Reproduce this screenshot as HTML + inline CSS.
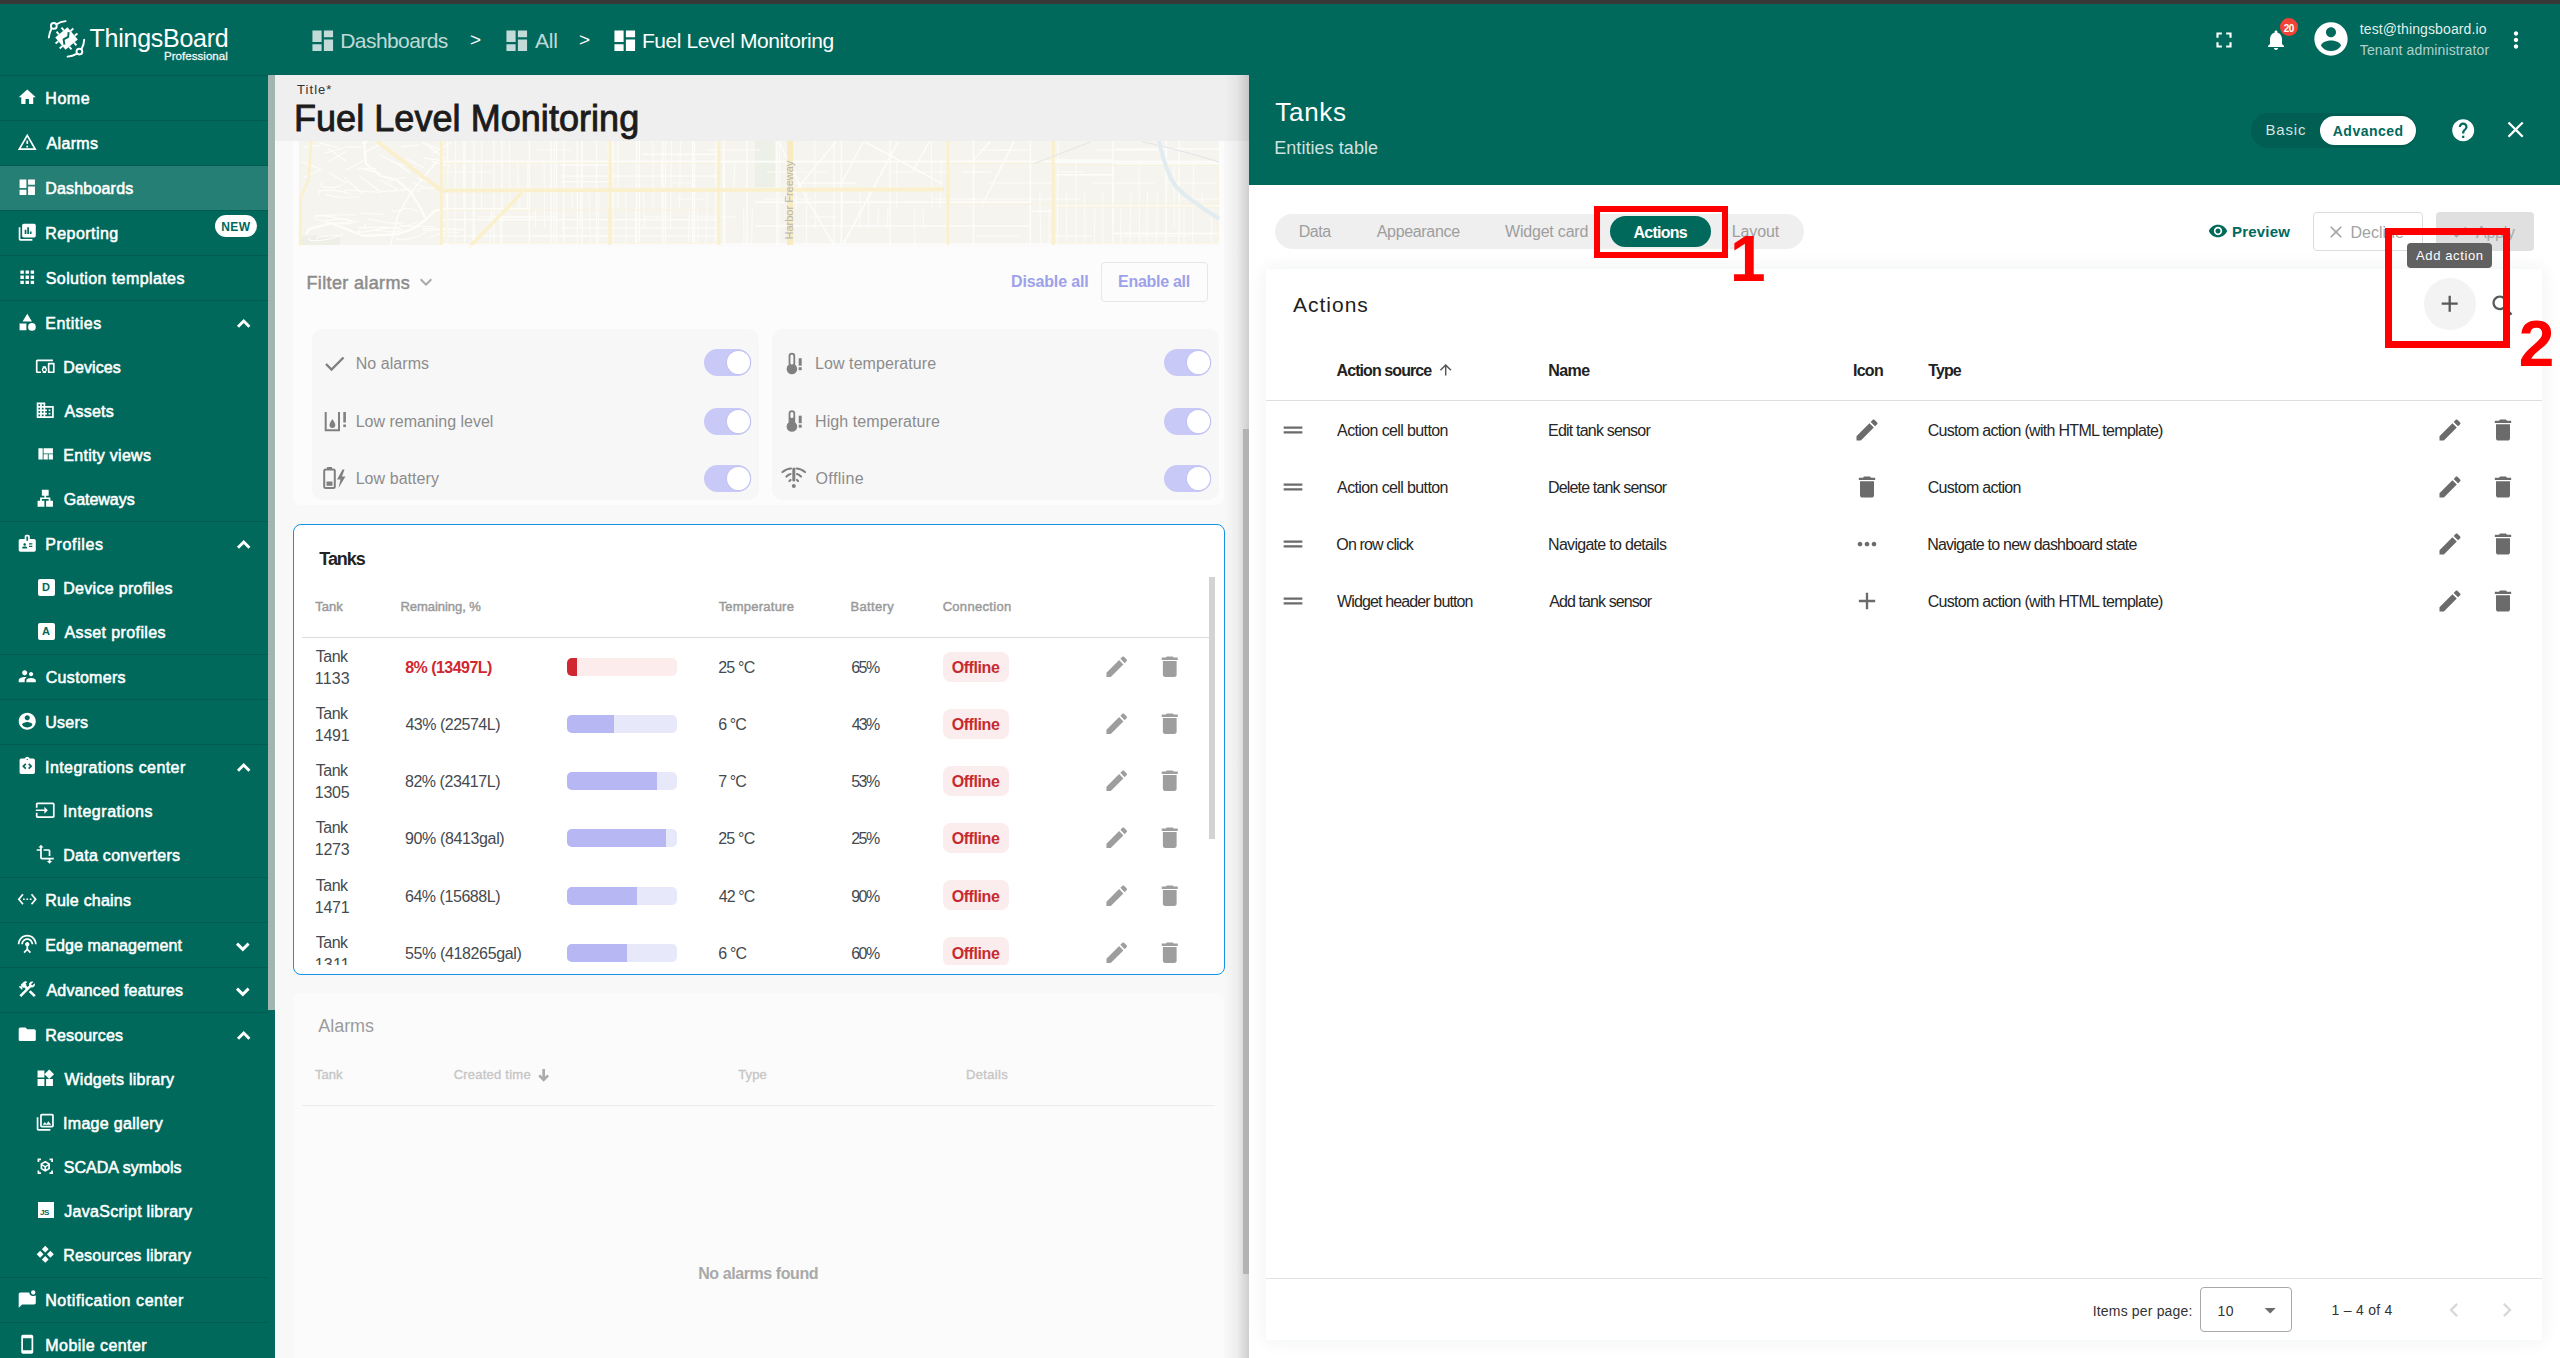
<!DOCTYPE html><html><head><meta charset="utf-8"><title>ThingsBoard</title><style>
*{box-sizing:border-box;margin:0;padding:0}
html,body{width:2560px;height:1358px;overflow:hidden;background:#fafafa;font-family:"Liberation Sans",sans-serif;position:relative}
.a{position:absolute}
svg{display:block;position:absolute;overflow:visible}
.t{position:absolute;white-space:nowrap;line-height:1}
</style></head><body>
<div class="a" style="left:0px;top:0px;width:2560px;height:4px;background:#383838"></div>
<div class="a" style="left:0px;top:4px;width:2560px;height:71px;background:#00695c"></div>
<div class="a" style="left:0px;top:75px;width:275px;height:1283px;background:#00695c"></div>
<div class="a" style="left:0px;top:75px;width:268px;height:1px;background:rgba(0,0,0,0.12)"></div>
<div class="a" style="left:0px;top:166px;width:268px;height:44px;background:rgba(255,255,255,0.15)"></div>
<svg style="left:17.00px;top:87.00px" width="20.5" height="20.5" viewBox="0 0 24 24" ><path fill="#fff" d="M10 20v-6h4v6h5v-8h3L12 3 2 12h3v8z"/></svg>
<div class="t" style="left:45.25px;top:91.05px;font-size:16px;color:#fff;font-weight:normal;letter-spacing:0.583px;-webkit-text-stroke:0.55px #fff">Home</div>
<div class="a" style="left:0px;top:120px;width:268px;height:1px;background:rgba(0,0,0,0.13)"></div>
<svg style="left:17.00px;top:132.00px" width="20.5" height="20.5" viewBox="0 0 24 24" ><path fill="#fff" d="M12 5.99L19.53 19H4.47L12 5.99M12 2L1 21h22L12 2zm1 14h-2v2h2v-2zm0-6h-2v4h2v-4z"/></svg>
<div class="t" style="left:46.50px;top:136.05px;font-size:16px;color:#fff;font-weight:normal;letter-spacing:0.350px;-webkit-text-stroke:0.55px #fff">Alarms</div>
<div class="a" style="left:0px;top:165px;width:268px;height:1px;background:rgba(0,0,0,0.13)"></div>
<svg style="left:17.00px;top:177.00px" width="20.5" height="20.5" viewBox="0 0 24 24" ><path fill="#fff" d="M3 13h8V3H3v10zm0 8h8v-6H3v6zm10 0h8V11h-8v10zm0-18v6h8V3h-8z"/></svg>
<div class="t" style="left:45.25px;top:181.05px;font-size:16px;color:#fff;font-weight:normal;letter-spacing:0.189px;-webkit-text-stroke:0.55px #fff">Dashboards</div>
<div class="a" style="left:0px;top:210px;width:268px;height:1px;background:rgba(0,0,0,0.13)"></div>
<svg style="left:17.00px;top:222.00px" width="20.5" height="20.5" viewBox="0 0 24 24" ><path fill="#fff" d="M4 6H2v14c0 1.1.9 2 2 2h14v-2H4V6zm16-4H8c-1.1 0-2 .9-2 2v12c0 1.1.9 2 2 2h12c1.1 0 2-.9 2-2V4c0-1.1-.9-2-2-2zM11 14H9V9h2v5zm3 0h-2V6h2v8zm3 0h-2v-3h2v3z"/></svg>
<div class="t" style="left:45.25px;top:226.05px;font-size:16px;color:#fff;font-weight:normal;letter-spacing:0.444px;-webkit-text-stroke:0.55px #fff">Reporting</div>
<div class="a" style="left:0px;top:255px;width:268px;height:1px;background:rgba(0,0,0,0.13)"></div>
<svg style="left:17.00px;top:267.00px" width="20.5" height="20.5" viewBox="0 0 24 24" ><path fill="#fff" d="M4 8h4V4H4v4zm6 12h4v-4h-4v4zm-6 0h4v-4H4v4zm0-6h4v-4H4v4zm6 0h4v-4h-4v4zm6-10v4h4V4h-4zm-6 4h4V4h-4v4zm6 6h4v-4h-4v4zm0 6h4v-4h-4v4z"/></svg>
<div class="t" style="left:45.75px;top:271.05px;font-size:16px;color:#fff;font-weight:normal;letter-spacing:0.412px;-webkit-text-stroke:0.55px #fff">Solution templates</div>
<div class="a" style="left:0px;top:300px;width:268px;height:1px;background:rgba(0,0,0,0.13)"></div>
<svg style="left:17.00px;top:312.00px" width="20.5" height="20.5" viewBox="0 0 24 24" ><path fill="#fff" d="M12 2l-5.5 9h11zM17.5 13a4.5 4.5 0 1 0 0 9a4.5 4.5 0 1 0 0-9zM3 13.5h8v8H3z"/></svg>
<div class="t" style="left:45.25px;top:316.05px;font-size:16px;color:#fff;font-weight:normal;letter-spacing:0.500px;-webkit-text-stroke:0.55px #fff">Entities</div>
<svg style="left:0;top:0" width="1" height="1"><path d="M237.98 326.67 L243.7 320.95 L249.42 326.67" fill="none" stroke="#fff" stroke-width="2.9"/></svg>
<svg style="left:35.00px;top:356.00px" width="20.5" height="20.5" viewBox="0 0 24 24" ><path fill="#fff" d="M3 6h18V4H3c-1.1 0-2 .9-2 2v12c0 1.1.9 2 2 2h4v-2H3V6zm10 6H9v1.78c-.61.55-1 1.33-1 2.22s.39 1.67 1 2.22V20h4v-1.78c.61-.55 1-1.34 1-2.22s-.39-1.67-1-2.22V12zm-2 5.5c-.83 0-1.5-.67-1.5-1.5s.67-1.5 1.5-1.5 1.5.67 1.5 1.5-.67 1.5-1.5 1.5zM22 8h-6c-.5 0-1 .5-1 1v10c0 .5.5 1 1 1h6c.5 0 1-.5 1-1V9c0-.5-.5-1-1-1zm-1 10h-4v-8h4v8z"/></svg>
<div class="t" style="left:63.25px;top:360.05px;font-size:16px;color:#fff;font-weight:normal;letter-spacing:0.092px;-webkit-text-stroke:0.55px #fff">Devices</div>
<svg style="left:35.00px;top:400.00px" width="20.5" height="20.5" viewBox="0 0 24 24" ><path fill="#fff" d="M12 7V3H2v18h20V7H12zM6 19H4v-2h2v2zm0-4H4v-2h2v2zm0-4H4V9h2v2zm0-4H4V5h2v2zm4 12H8v-2h2v2zm0-4H8v-2h2v2zm0-4H8V9h2v2zm0-4H8V5h2v2zm10 12h-8v-2h2v-2h-2v-2h2v-2h-2V9h8v10zm-2-8h-2v2h2v-2zm0 4h-2v2h2v-2z"/></svg>
<div class="t" style="left:64.50px;top:404.05px;font-size:16px;color:#fff;font-weight:normal;letter-spacing:0.260px;-webkit-text-stroke:0.55px #fff">Assets</div>
<svg style="left:35.00px;top:444.00px" width="20.5" height="20.5" viewBox="0 0 24 24" ><path fill="#fff" d="M10 18h5v-6h-5v6zm-6 0h5V5H4v13zm12 0h5v-6h-5v6zM10 5v6h11V5H10z"/></svg>
<div class="t" style="left:63.25px;top:448.05px;font-size:16px;color:#fff;font-weight:normal;letter-spacing:0.295px;-webkit-text-stroke:0.55px #fff">Entity views</div>
<svg style="left:35.00px;top:488.00px" width="20.5" height="20.5" viewBox="0 0 24 24" ><path fill="#fff" d="M13 22h8v-7h-3v-4h-5V9h3V2H8v7h3v2H6v4H3v7h8v-7H8v-2h8v2h-3z"/></svg>
<div class="t" style="left:63.75px;top:492.05px;font-size:16px;color:#fff;font-weight:normal;letter-spacing:-0.029px;-webkit-text-stroke:0.55px #fff">Gateways</div>
<div class="a" style="left:0px;top:521px;width:268px;height:1px;background:rgba(0,0,0,0.13)"></div>
<svg style="left:17.00px;top:533.00px" width="20.5" height="20.5" viewBox="0 0 24 24" ><path fill="#fff" d="M20 7h-5V4c0-1.1-.9-2-2-2h-2c-1.1 0-2 .9-2 2v3H4c-1.1 0-2 .9-2 2v11c0 1.1.9 2 2 2h16c1.1 0 2-.9 2-2V9c0-1.1-.9-2-2-2zM9 12c.83 0 1.5.67 1.5 1.5S9.83 15 9 15s-1.5-.67-1.5-1.5S8.17 12 9 12zm3 6H6v-.43c0-.6.36-1.15.92-1.39.64-.28 1.34-.43 2.08-.43s1.44.15 2.08.43c.55.24.92.78.92 1.39V18zm1-9h-2V4h2v5zm5 7.5h-4V15h4v1.5zm0-3h-4V12h4v1.5z"/></svg>
<div class="t" style="left:45.25px;top:537.05px;font-size:16px;color:#fff;font-weight:normal;letter-spacing:0.643px;-webkit-text-stroke:0.55px #fff">Profiles</div>
<svg style="left:0;top:0" width="1" height="1"><path d="M237.98 547.67 L243.7 541.95 L249.42 547.67" fill="none" stroke="#fff" stroke-width="2.9"/></svg>
<div class="a" style="left:37.5px;top:578.5px;width:17px;height:17px;background:#fff;border-radius:2px"></div>
<div class="t" style="left:37.5px;top:578.5px;width:17px;height:17px;line-height:17px;text-align:center;font-size:11px;font-weight:bold;color:#00695c">D</div>
<div class="t" style="left:63.25px;top:581.05px;font-size:16px;color:#fff;font-weight:normal;letter-spacing:0.304px;-webkit-text-stroke:0.55px #fff">Device profiles</div>
<div class="a" style="left:37.5px;top:622.5px;width:17px;height:17px;background:#fff;border-radius:2px"></div>
<div class="t" style="left:37.5px;top:622.5px;width:17px;height:17px;line-height:17px;text-align:center;font-size:11px;font-weight:bold;color:#00695c">A</div>
<div class="t" style="left:64.50px;top:625.05px;font-size:16px;color:#fff;font-weight:normal;letter-spacing:0.385px;-webkit-text-stroke:0.55px #fff">Asset profiles</div>
<div class="a" style="left:0px;top:654px;width:268px;height:1px;background:rgba(0,0,0,0.13)"></div>
<svg style="left:17.00px;top:666.00px" width="20.5" height="20.5" viewBox="0 0 24 24" ><path fill="#fff" d="M16.5 12c1.38 0 2.49-1.12 2.49-2.5S17.88 7 16.5 7C15.12 7 14 8.12 14 9.5s1.12 2.5 2.5 2.5zM9 11c1.66 0 2.99-1.34 2.99-3S10.66 5 9 5C7.34 5 6 6.34 6 8s1.34 3 3 3zm7.5 3c-1.83 0-5.5.92-5.5 2.75V19h11v-2.25c0-1.830-3.67-2.75-5.5-2.75zM9 13c-2.33 0-7 1.17-7 3.5V19h7v-2.25c0-.85.33-2.34 2.37-3.47C10.5 13.1 9.66 13 9 13z"/></svg>
<div class="t" style="left:45.75px;top:670.05px;font-size:16px;color:#fff;font-weight:normal;letter-spacing:0.312px;-webkit-text-stroke:0.55px #fff">Customers</div>
<div class="a" style="left:0px;top:699px;width:268px;height:1px;background:rgba(0,0,0,0.13)"></div>
<svg style="left:17.00px;top:711.00px" width="20.5" height="20.5" viewBox="0 0 24 24" ><path fill="#fff" d="M12 2C6.48 2 2 6.48 2 12s4.48 10 10 10 10-4.48 10-10S17.52 2 12 2zm0 3c1.66 0 3 1.34 3 3s-1.34 3-3 3-3-1.34-3-3 1.34-3 3-3zm0 14.2c-2.5 0-4.71-1.28-6-3.22.03-1.99 4-3.08 6-3.08 1.99 0 5.97 1.09 6 3.08-1.29 1.94-3.5 3.22-6 3.22z"/></svg>
<div class="t" style="left:45.25px;top:715.05px;font-size:16px;color:#fff;font-weight:normal;letter-spacing:0.225px;-webkit-text-stroke:0.55px #fff">Users</div>
<div class="a" style="left:0px;top:744px;width:268px;height:1px;background:rgba(0,0,0,0.13)"></div>
<svg style="left:17.00px;top:756.00px" width="20.5" height="20.5" viewBox="0 0 24 24" ><path fill="#fff" d="M19 3h-4.18C14.4 1.84 13.3 1 12 1s-2.4.84-2.82 2H5c-1.1 0-2 .9-2 2v14c0 1.1.9 2 2 2h14c1.1 0 2-.9 2-2V5c0-1.1-.9-2-2-2zM11 14.17l-1.41 1.42L6 12l3.59-3.59L11 9.83 8.83 12 11 14.17zm1-9.42c-.41 0-.75-.34-.75-.75s.34-.75.75-.75.75.34.75.75-.34.75-.75.75zm2.41 10.84L13 14.17 15.17 12 13 9.83l1.41-1.42L18 12l-3.59 3.59z"/></svg>
<div class="t" style="left:45.00px;top:760.05px;font-size:16px;color:#fff;font-weight:normal;letter-spacing:0.431px;-webkit-text-stroke:0.55px #fff">Integrations center</div>
<svg style="left:0;top:0" width="1" height="1"><path d="M237.98 770.67 L243.7 764.95 L249.42 770.67" fill="none" stroke="#fff" stroke-width="2.9"/></svg>
<svg style="left:35.00px;top:800.00px" width="20.5" height="20.5" viewBox="0 0 24 24" ><path fill="#fff" d="M21 3.01H3c-1.1 0-2 .9-2 2V9h2V4.99h18v14.03H3V15H1v4.01c0 1.1.9 1.98 2 1.98h18c1.1 0 2-.88 2-1.98v-14c0-1.11-.9-2-2-2zM11 16l4-4-4-4v3H1v2h10v3z"/></svg>
<div class="t" style="left:63.00px;top:804.05px;font-size:16px;color:#fff;font-weight:normal;letter-spacing:0.536px;-webkit-text-stroke:0.55px #fff">Integrations</div>
<svg style="left:35.00px;top:844.00px" width="20.5" height="20.5" viewBox="0 0 24 24" ><path fill="#fff" d="M22 18v-2H8V4h2L7 1 4 4h2v2H2v2h4v8c0 1.1.9 2 2 2h8v2h-2l3 3 3-3h-2v-2h4zM10 8h6v6h2V8c0-1.1-.9-2-2-2h-6v2z"/></svg>
<div class="t" style="left:63.25px;top:848.05px;font-size:16px;color:#fff;font-weight:normal;letter-spacing:0.275px;-webkit-text-stroke:0.55px #fff">Data converters</div>
<div class="a" style="left:0px;top:877px;width:268px;height:1px;background:rgba(0,0,0,0.13)"></div>
<svg style="left:17.00px;top:889.00px" width="20.5" height="20.5" viewBox="0 0 24 24" ><path fill="#fff" d="M7.77 6.76L6.23 5.48.82 12l5.41 6.52 1.54-1.28L3.42 12l4.35-5.24zM7 13h2v-2H7v2zm10-2h-2v2h2v-2zm-6 2h2v-2h-2v2zm6.77-7.52l-1.54 1.28L20.58 12l-4.35 5.24 1.54 1.28L23.18 12l-5.41-6.52z"/></svg>
<div class="t" style="left:45.25px;top:893.05px;font-size:16px;color:#fff;font-weight:normal;letter-spacing:0.205px;-webkit-text-stroke:0.55px #fff">Rule chains</div>
<div class="a" style="left:0px;top:922px;width:268px;height:1px;background:rgba(0,0,0,0.13)"></div>
<svg style="left:17.00px;top:934.00px" width="20.5" height="20.5" viewBox="0 0 24 24" ><path fill="#fff" d="M12 5c-3.87 0-7 3.13-7 7h2c0-2.76 2.24-5 5-5s5 2.24 5 5h2c0-3.870-3.13-7-7-7zm1 9.29c.88-.39 1.5-1.26 1.5-2.29 0-1.38-1.12-2.5-2.5-2.5S9.5 10.62 9.5 12c0 1.02.62 1.9 1.5 2.29v3.3L7.59 21 9 22.41l3-3 3 3L16.41 21 13 17.59v-3.3zM12 1C5.93 1 1 5.93 1 12h2c0-4.97 4.03-9 9-9s9 4.03 9 9h2c0-6.07-4.93-11-11-11z"/></svg>
<div class="t" style="left:45.25px;top:938.05px;font-size:16px;color:#fff;font-weight:normal;letter-spacing:0.111px;-webkit-text-stroke:0.55px #fff">Edge management</div>
<svg style="left:0;top:0" width="1" height="1"><path d="M237 943.6 L242.8 949.4 L248.6 943.6" fill="none" stroke="#fff" stroke-width="2.9"/></svg>
<div class="a" style="left:0px;top:967px;width:268px;height:1px;background:rgba(0,0,0,0.13)"></div>
<svg style="left:17.00px;top:979.00px" width="20.5" height="20.5" viewBox="0 0 24 24" ><path fill="#fff" d="M13.783 15.172l2.121-2.121 5.996 5.996-2.121 2.121zM17.5 10c1.93 0 3.5-1.57 3.5-3.5 0-.58-.16-1.12-.41-1.6l-2.7 2.7-1.49-1.49 2.7-2.7c-.48-.25-1.02-.41-1.6-.41C15.57 3 14 4.57 14 6.5c0 .41.08.8.21 1.16l-1.85 1.85-1.780-1.78.71-.71-1.41-1.41L12 3.49c-1.17-1.17-3.07-1.17-4.24 0L4.22 7.030l1.41 1.41H2.81l-.71.71 3.54 3.54.71-.71V9.15l1.41 1.41.71-.71 1.78 1.78-7.41 7.41 2.12 2.12L16.34 9.79c.36.13.75.21 1.16.21z"/></svg>
<div class="t" style="left:46.50px;top:983.05px;font-size:16px;color:#fff;font-weight:normal;letter-spacing:0.200px;-webkit-text-stroke:0.55px #fff">Advanced features</div>
<svg style="left:0;top:0" width="1" height="1"><path d="M237 988.6 L242.8 994.4 L248.6 988.6" fill="none" stroke="#fff" stroke-width="2.9"/></svg>
<div class="a" style="left:0px;top:1012px;width:268px;height:1px;background:rgba(0,0,0,0.13)"></div>
<svg style="left:17.00px;top:1024.00px" width="20.5" height="20.5" viewBox="0 0 24 24" ><path fill="#fff" d="M10 4H4c-1.1 0-1.99.9-1.99 2L2 18c0 1.1.9 2 2 2h16c1.1 0 2-.9 2-2V8c0-1.1-.9-2-2-2h-8l-2-2z"/></svg>
<div class="t" style="left:45.25px;top:1028.05px;font-size:16px;color:#fff;font-weight:normal;letter-spacing:0.156px;-webkit-text-stroke:0.55px #fff">Resources</div>
<svg style="left:0;top:0" width="1" height="1"><path d="M237.98 1038.67 L243.7 1032.95 L249.42 1038.67" fill="none" stroke="#fff" stroke-width="2.9"/></svg>
<svg style="left:35.00px;top:1068.00px" width="20.5" height="20.5" viewBox="0 0 24 24" ><path fill="#fff" d="M13 13v8h8v-8h-8zM3 21h8v-8H3v8zM3 3v8h8V3H3zm13.66-1.31L11 7.34 16.66 13l5.66-5.66-5.66-5.65z"/></svg>
<div class="t" style="left:64.50px;top:1072.05px;font-size:16px;color:#fff;font-weight:normal;letter-spacing:0.268px;-webkit-text-stroke:0.55px #fff">Widgets library</div>
<svg style="left:35.00px;top:1112.00px" width="20.5" height="20.5" viewBox="0 0 24 24" ><path fill="#fff" d="M20 4v12H8V4h12m0-2H8c-1.1 0-2 .9-2 2v12c0 1.1.9 2 2 2h12c1.1 0 2-.9 2-2V4c0-1.1-.9-2-2-2zm-8.5 9.67l1.69 2.26 2.48-3.1L19 15H9zM2 6v14c0 1.1.9 2 2 2h14v-2H4V6H2z"/></svg>
<div class="t" style="left:63.00px;top:1116.05px;font-size:16px;color:#fff;font-weight:normal;letter-spacing:0.317px;-webkit-text-stroke:0.55px #fff">Image gallery</div>
<svg style="left:35.00px;top:1156.00px" width="20.5" height="20.5" viewBox="0 0 24 24" ><path fill="#fff" d="M3 3h4v2H5v2H3zM17 3h4v4h-2V5h-2zM3 17h2v2h2v2H3zM19 17h2v4h-4v-2h2zM12 5.5l5.5 3.2v6.6L12 18.5l-5.5-3.2V8.7zM12 7.8l-3.4 2 3.4 2 3.4-2zM8.5 11.5v2.7l2.5 1.5v-2.7zM15.5 11.5l-2.5 1.5v2.7l2.5-1.5z"/></svg>
<div class="t" style="left:63.75px;top:1160.05px;font-size:16px;color:#fff;font-weight:normal;letter-spacing:0.042px;-webkit-text-stroke:0.55px #fff">SCADA symbols</div>
<div class="a" style="left:38px;top:1202px;width:16px;height:16px;background:#fff"></div>
<div class="t" style="left:40px;top:1209px;font-size:8px;font-weight:bold;color:#00695c;letter-spacing:-0.5px">JS</div>
<div class="t" style="left:64.25px;top:1204.05px;font-size:16px;color:#fff;font-weight:normal;letter-spacing:0.294px;-webkit-text-stroke:0.55px #fff">JavaScript library</div>
<svg style="left:35.00px;top:1244.00px" width="20.5" height="20.5" viewBox="0 0 24 24" ><path fill="#fff" d="M12 2l4 4-4 4-4-4zM6 8l4 4-4 4-4-4zM18 8l4 4-4 4-4-4zM12 14l4 4-4 4-4-4z"/></svg>
<div class="t" style="left:63.25px;top:1248.05px;font-size:16px;color:#fff;font-weight:normal;letter-spacing:0.203px;-webkit-text-stroke:0.55px #fff">Resources library</div>
<div class="a" style="left:0px;top:1277px;width:268px;height:1px;background:rgba(0,0,0,0.13)"></div>
<svg style="left:17.00px;top:1289.00px" width="20.5" height="20.5" viewBox="0 0 24 24" ><path fill="#fff" d="M19 6.5c1.38 0 2.5-1.12 2.5-2.5S20.38 1.5 19 1.5 16.5 2.62 16.5 4 17.62 6.5 19 6.5zM17 8c-1.3-.6-2.3-1.8-2.5-3.3V4H4c-1.1 0-2 .9-2 2v16l4-4h14c1.1 0 2-.9 2-2V7.7C21.2 8 20.2 8.3 19 8.3c-.7 0-1.4-.1-2-.3z"/></svg>
<div class="t" style="left:45.25px;top:1293.05px;font-size:16px;color:#fff;font-weight:normal;letter-spacing:0.556px;-webkit-text-stroke:0.55px #fff">Notification center</div>
<div class="a" style="left:0px;top:1322px;width:268px;height:1px;background:rgba(0,0,0,0.13)"></div>
<svg style="left:17.00px;top:1334.00px" width="20.5" height="20.5" viewBox="0 0 24 24" ><path fill="#fff" d="M17 1.01L7 1c-1.1 0-2 .9-2 2v18c0 1.1.9 2 2 2h10c1.1 0 2-.9 2-2V3c0-1.1-.9-1.99-2-1.99zM17 19H7V5h10v14z"/></svg>
<div class="t" style="left:45.25px;top:1338.05px;font-size:16px;color:#fff;font-weight:normal;letter-spacing:0.450px;-webkit-text-stroke:0.55px #fff">Mobile center</div>
<div class="a" style="left:215px;top:215px;width:42px;height:22px;background:#fff;border-radius:11px"></div>
<div class="t" style="left:221.25px;top:221.10px;font-size:12px;color:#00695c;font-weight:bold;letter-spacing:0.375px;">NEW</div>
<div class="a" style="left:268px;top:75px;width:7px;height:935px;background:#a3b5b1"></div>
<svg style="left:40px;top:10px" width="50" height="52" viewBox="40 10 50 52"><g fill="none" stroke="#fff" stroke-width="1.9" stroke-linecap="round"><path d="M48.8 37.6 Q49.6 32 51.6 28.6"/><path d="M56.6 24.2 Q60.5 21.6 65.6 21.1"/><circle cx="53.8" cy="25.9" r="2.9"/><path d="M84.2 39.6 Q84 44.5 81.6 48.9"/><path d="M76.6 53.9 Q72.5 56.2 67.6 56.6"/><circle cx="79.4" cy="51.6" r="2.9"/></g><g transform="rotate(-40 66.5 38.5)"><rect x="58.5" y="30.5" width="16" height="16" fill="#fff"/><path d="M63.30 30.5v-3.6 M63.30 46.5v3.6 M58.5 35.30h-3.6 M74.5 35.30h3.6 M69.70 30.5v-3.6 M69.70 46.5v3.6 M58.5 41.70h-3.6 M74.5 41.70h3.6" stroke="#fff" stroke-width="1.9"/></g><path d="M68.6 32.2 L68.2 36.8 L63.6 39.4 L64.4 44.6" stroke="#00695c" stroke-width="1.9" fill="none" stroke-linejoin="round"/></svg>
<div class="t" style="left:89.50px;top:26.20px;font-size:25px;color:#fff;font-weight:normal;letter-spacing:-0.250px;">ThingsBoard</div>
<div class="t" style="left:164.00px;top:50.71px;font-size:11.5px;color:#f0f6f5;font-weight:normal;letter-spacing:0.045px;-webkit-text-stroke:0.3px #f0f6f5">Professional</div>
<svg style="left:309.40px;top:26.60px" width="27.5" height="27.5" viewBox="0 0 24 24" ><path fill="rgba(255,255,255,0.76)" d="M3 13h8V3H3v10zm0 8h8v-6H3v6zm10 0h8V11h-8v10zm0-18v6h8V3h-8z"/></svg>
<div class="t" style="left:340.25px;top:29.93px;font-size:21px;color:rgba(255,255,255,0.76);font-weight:normal;letter-spacing:-0.572px;">Dashboards</div>
<div class="t" style="left:470.00px;top:29.60px;font-size:19px;color:#fff;font-weight:normal;letter-spacing:-0.250px;">&gt;</div>
<svg style="left:502.60px;top:26.60px" width="27.5" height="27.5" viewBox="0 0 24 24" ><path fill="rgba(255,255,255,0.76)" d="M3 13h8V3H3v10zm0 8h8v-6H3v6zm10 0h8V11h-8v10zm0-18v6h8V3h-8z"/></svg>
<div class="t" style="left:535.00px;top:29.93px;font-size:21px;color:rgba(255,255,255,0.76);font-weight:normal;letter-spacing:-0.250px;">All</div>
<div class="t" style="left:579.00px;top:29.60px;font-size:19px;color:#fff;font-weight:normal;letter-spacing:0.750px;">&gt;</div>
<svg style="left:611.30px;top:26.60px" width="27.5" height="27.5" viewBox="0 0 24 24" ><path fill="#fff" d="M3 13h8V3H3v10zm0 8h8v-6H3v6zm10 0h8V11h-8v10zm0-18v6h8V3h-8z"/></svg>
<div class="t" style="left:641.95px;top:29.93px;font-size:21px;color:#fff;font-weight:normal;letter-spacing:-0.430px;">Fuel Level Monitoring</div>
<svg style="left:2211.00px;top:27.00px" width="26" height="26" viewBox="0 0 24 24" ><path fill="#fff" d="M7 14H5v5h5v-2H7v-3zm-2-4h2V7h3V5H5v5zm12 7h-3v2h5v-5h-2v3zM14 5v2h3v3h2V5h-5z"/></svg>
<svg style="left:2264.00px;top:27.50px" width="24" height="24" viewBox="0 0 24 24" ><path fill="#fff" d="M12 22c1.1 0 2-.9 2-2h-4c0 1.1.89 2 2 2zm6-6v-5c0-3.07-1.64-5.64-4.5-6.32V4c0-.83-.67-1.5-1.5-1.5s-1.5.67-1.5 1.5v.68C7.63 5.36 6 7.920 6 11v5l-2 2v1h16v-1l-2-2z"/></svg>
<div class="a" style="left:2280px;top:18px;width:18px;height:18px;background:#f44336;border-radius:9px"></div>
<div class="t" style="left:2283.75px;top:23.60px;font-size:10px;color:#fff;font-weight:bold;letter-spacing:-0.500px;">20</div>
<svg style="left:2311.00px;top:19.00px" width="40" height="40" viewBox="0 0 24 24" ><path fill="#fff" d="M12 2C6.48 2 2 6.48 2 12s4.48 10 10 10 10-4.48 10-10S17.52 2 12 2zm0 3c1.66 0 3 1.34 3 3s-1.34 3-3 3-3-1.34-3-3 1.34-3 3-3zm0 14.2c-2.5 0-4.71-1.28-6-3.22.03-1.99 4-3.08 6-3.08 1.99 0 5.97 1.09 6 3.08-1.29 1.94-3.5 3.22-6 3.22z"/></svg>
<div class="t" style="left:2359.75px;top:22.05px;font-size:14px;color:rgba(255,255,255,0.9);font-weight:normal;letter-spacing:0.111px;">test@thingsboard.io</div>
<div class="t" style="left:2359.75px;top:43.35px;font-size:14px;color:rgba(255,255,255,0.7);font-weight:normal;letter-spacing:0.132px;">Tenant administrator</div>
<svg style="left:2503.00px;top:27.00px" width="26" height="26" viewBox="0 0 24 24" ><path fill="#fff" d="M12 8c1.1 0 2-.9 2-2s-.9-2-2-2-2 .9-2 2 .9 2 2 2zm0 2c-1.1 0-2 .9-2 2s.9 2 2 2 2-.9 2-2-.9-2-2-2zm0 6c-1.1 0-2 .9-2 2s.9 2 2 2 2-.9 2-2-.9-2-2-2z"/></svg>
<div class="a" style="left:275px;top:75px;width:974px;height:1283px;background:#f8f8f8"></div>
<div class="a" style="left:275px;top:75px;width:1px;height:1283px;background:#fff"></div>
<div class="a" style="left:293px;top:100px;width:931px;height:405px;background:#fcfcfc;border-radius:8px"></div>
<svg style="left:299px;top:141px" width="920" height="106" viewBox="299 141 920 106"><rect x="299" y="141" width="920" height="106" fill="#f6f4ee"/><rect x="755" y="141" width="20" height="46" fill="#edf0e6"/><rect x="300" y="236" width="40" height="11" fill="#eef0e7"/><path d="M361.5 213.6 c8.5 -0.5 15.2 1.4 23.7 0.1" stroke="#fdfdfb" stroke-width="1.1" fill="none"/><path d="M383.7 227.6 c-8.1 -3.1 6.8 5.0 33.9 -5.5" stroke="#fdfdfb" stroke-width="1.1" fill="none"/><path d="M427.8 237.9 c3.1 1.8 8.1 -7.8 30.6 -5.3" stroke="#fdfdfb" stroke-width="1.1" fill="none"/><path d="M328.8 194.5 c-9.4 -0.6 13.8 5.5 30.4 1.7" stroke="#fdfdfb" stroke-width="1.1" fill="none"/><path d="M367.5 219.7 c-0.9 -3.5 25.0 7.9 36.8 2.5" stroke="#fdfdfb" stroke-width="1.1" fill="none"/><path d="M344.4 193.8 c-4.2 -6.9 20.3 -1.6 36.9 -1.4" stroke="#fdfdfb" stroke-width="1.1" fill="none"/><path d="M424.8 230.8 c-10.0 -4.6 23.2 -0.5 39.6 -1.2" stroke="#fdfdfb" stroke-width="1.1" fill="none"/><path d="M314.1 217.8 c5.6 -3.7 6.7 -2.7 39.3 3.1" stroke="#fdfdfb" stroke-width="1.1" fill="none"/><path d="M319.7 194.8 c-8.0 -7.0 20.9 -5.2 31.2 -0.6" stroke="#fdfdfb" stroke-width="1.1" fill="none"/><path d="M328.8 223.9 c-7.4 2.3 7.3 -1.3 24.3 -2.8" stroke="#fdfdfb" stroke-width="1.1" fill="none"/><path d="M426.4 228.2 c-3.9 6.2 9.2 -1.7 37.1 1.7" stroke="#fdfdfb" stroke-width="1.1" fill="none"/><path d="M317.5 239.4 c-5.7 -3.9 20.5 -2.7 25.9 -5.1" stroke="#fdfdfb" stroke-width="1.1" fill="none"/><path d="M316.3 215.0 c-5.1 1.6 12.4 -0.7 39.2 -0.2" stroke="#fdfdfb" stroke-width="1.1" fill="none"/><path d="M376.8 232.0 c-6.3 -5.5 23.2 5.1 25.0 -3.7" stroke="#fdfdfb" stroke-width="1.1" fill="none"/><path d="M397.4 236.4 c-6.1 7.2 22.6 1.7 28.4 -4.8" stroke="#fdfdfb" stroke-width="1.1" fill="none"/><path d="M309.8 237.8 c-5.2 3.3 10.1 5.2 31.9 -2.5" stroke="#fdfdfb" stroke-width="1.1" fill="none"/><path d="M326.9 223.2 c-8.6 -4.3 16.2 5.6 32.3 -2.6" stroke="#fdfdfb" stroke-width="1.1" fill="none"/><path d="M419.7 192.2 c-9.7 -3.7 13.9 -7.0 23.5 -1.6" stroke="#fdfdfb" stroke-width="1.1" fill="none"/><path d="M376.5 187.9 c-2.8 6.3 24.6 2.5 33.8 1.0" stroke="#fdfdfb" stroke-width="1.1" fill="none"/><path d="M322.5 182.1 c-9.6 6.6 19.0 7.4 20.4 1.6" stroke="#fdfdfb" stroke-width="1.1" fill="none"/><path d="M365.3 223.8 c-3.6 8.0 6.5 0.7 34.7 4.8" stroke="#fdfdfb" stroke-width="1.1" fill="none"/><path d="M397.1 222.2 c5.9 6.6 12.0 3.0 38.0 4.5" stroke="#fdfdfb" stroke-width="1.1" fill="none"/><path d="M357.1 227.4 c7.3 1.2 17.5 -1.9 31.7 1.3" stroke="#fdfdfb" stroke-width="1.1" fill="none"/><path d="M315.0 218.4 c9.9 6.1 19.6 -1.8 34.7 1.0" stroke="#fdfdfb" stroke-width="1.1" fill="none"/><path d="M360.1 230.3 c-8.3 4.0 5.6 1.6 29.6 -3.2" stroke="#fdfdfb" stroke-width="1.1" fill="none"/><path d="M392.3 209.8 c2.3 6.7 10.1 -7.8 26.0 2.1" stroke="#fdfdfb" stroke-width="1.1" fill="none"/><path d="M328.4 148.5 l18.0 13.1" stroke="#fdfdfb" stroke-width="1.2" fill="none"/><path d="M392.4 160.4 l18.0 12.7" stroke="#fdfdfb" stroke-width="1.2" fill="none"/><path d="M345.8 170.3 l18.0 -9.8" stroke="#fdfdfb" stroke-width="1.2" fill="none"/><path d="M360.3 176.5 l18.0 13.4" stroke="#fdfdfb" stroke-width="1.2" fill="none"/><path d="M423.2 157.9 l18.0 2.7" stroke="#fdfdfb" stroke-width="1.2" fill="none"/><path d="M344.3 147.0 l18.0 -0.1" stroke="#fdfdfb" stroke-width="1.2" fill="none"/><path d="M417.2 178.3 l18.0 6.8" stroke="#fdfdfb" stroke-width="1.2" fill="none"/><path d="M433.0 153.2 l18.0 -10.7" stroke="#fdfdfb" stroke-width="1.2" fill="none"/><path d="M363.1 153.1 l18.0 -9.3" stroke="#fdfdfb" stroke-width="1.2" fill="none"/><path d="M358.0 168.5 l18.0 -0.2" stroke="#fdfdfb" stroke-width="1.2" fill="none"/><path d="M344.2 177.9 l18.0 15.6" stroke="#fdfdfb" stroke-width="1.2" fill="none"/><path d="M363.3 144.3 l18.0 -15.2" stroke="#fdfdfb" stroke-width="1.2" fill="none"/><path d="M422.2 142.8 l18.0 6.8" stroke="#fdfdfb" stroke-width="1.2" fill="none"/><path d="M379.9 154.6 l18.0 9.4" stroke="#fdfdfb" stroke-width="1.2" fill="none"/><path d="M302.7 147.0 l18.0 -1.5" stroke="#fdfdfb" stroke-width="1.2" fill="none"/><path d="M303.5 177.5 l18.0 -8.5" stroke="#fdfdfb" stroke-width="1.2" fill="none"/><path d="M319.7 143.1 l18.0 4.2" stroke="#fdfdfb" stroke-width="1.2" fill="none"/><path d="M362.5 168.7 l18.0 5.0" stroke="#fdfdfb" stroke-width="1.2" fill="none"/><path d="M413.0 183.2 l18.0 6.0" stroke="#fdfdfb" stroke-width="1.2" fill="none"/><path d="M327.9 161.9 l18.0 -10.4" stroke="#fdfdfb" stroke-width="1.2" fill="none"/><path d="M301.5 161.8 l18.0 6.9" stroke="#fdfdfb" stroke-width="1.2" fill="none"/><path d="M325.1 153.0 l18.0 -5.0" stroke="#fdfdfb" stroke-width="1.2" fill="none"/><path d="M397.6 163.9 l18.0 3.7" stroke="#fdfdfb" stroke-width="1.2" fill="none"/><path d="M405.9 158.3 l18.0 9.5" stroke="#fdfdfb" stroke-width="1.2" fill="none"/><path d="M426.9 144.8 l18.0 14.0" stroke="#fdfdfb" stroke-width="1.2" fill="none"/><path d="M401.1 146.7 l18.0 -1.5" stroke="#fdfdfb" stroke-width="1.2" fill="none"/><path d="M387.6 181.0 l18.0 -4.0" stroke="#fdfdfb" stroke-width="1.2" fill="none"/><path d="M379.6 179.7 l18.0 9.6" stroke="#fdfdfb" stroke-width="1.2" fill="none"/><path d="M432.2 161.4 l18.0 4.9" stroke="#fdfdfb" stroke-width="1.2" fill="none"/><path d="M328.7 172.8 l18.0 10.3" stroke="#fdfdfb" stroke-width="1.2" fill="none"/><path d="M364.0 141.0 L365.8 163.4 L380.4 176.0 L396.7 179.8 L411.0 192.5 L422.0 210.6 L425.8 219.7 L434.8 210.6 L441.0 209.7" stroke="#fdfdfb" stroke-width="2.2" fill="none" stroke-linejoin="round"/><path d="M425.8 219.7 L413.0 228.8 L396.7 234.3 L364.0 236.0 L331.3 223.4 L309.5 228.8 L306.0 234.3" stroke="#fdfdfb" stroke-width="2.4" fill="none" stroke-linejoin="round"/><path d="M436.7 161.6 L411.0 192.5 L398.0 215.0 L390.0 247.0" stroke="#fdfdfb" stroke-width="1.6" fill="none" stroke-linejoin="round"/><path d="M311.3 141.0 L308.6 179.8 L300.4 198.0 L300.0 247.0" stroke="#faf0cc" stroke-width="2.6" fill="none" stroke-linejoin="round"/><path d="M447.6 141.0 L447.6 247.0" stroke="#fdfdfb" stroke-width="1.3" fill="none" stroke-linejoin="round"/><path d="M464.8 141.0 L464.8 247.0" stroke="#fdfdfb" stroke-width="1.3" fill="none" stroke-linejoin="round"/><path d="M473.9 141.0 L473.9 247.0" stroke="#fdfdfb" stroke-width="1.3" fill="none" stroke-linejoin="round"/><path d="M493.9 141.0 L493.9 247.0" stroke="#fdfdfb" stroke-width="1.3" fill="none" stroke-linejoin="round"/><path d="M502.0 141.0 L502.0 247.0" stroke="#fdfdfb" stroke-width="1.3" fill="none" stroke-linejoin="round"/><path d="M529.3 141.0 L529.3 247.0" stroke="#fdfdfb" stroke-width="1.3" fill="none" stroke-linejoin="round"/><path d="M551.0 141.0 L551.0 247.0" stroke="#fdfdfb" stroke-width="1.3" fill="none" stroke-linejoin="round"/><path d="M556.5 141.0 L556.5 247.0" stroke="#fdfdfb" stroke-width="1.3" fill="none" stroke-linejoin="round"/><path d="M563.8 141.0 L563.8 247.0" stroke="#fdfdfb" stroke-width="1.3" fill="none" stroke-linejoin="round"/><path d="M577.4 141.0 L577.4 247.0" stroke="#fdfdfb" stroke-width="1.3" fill="none" stroke-linejoin="round"/><path d="M582.0 141.0 L582.0 247.0" stroke="#fdfdfb" stroke-width="1.3" fill="none" stroke-linejoin="round"/><path d="M596.5 141.0 L596.5 247.0" stroke="#fdfdfb" stroke-width="1.3" fill="none" stroke-linejoin="round"/><path d="M612.8 141.0 L612.8 247.0" stroke="#fdfdfb" stroke-width="1.3" fill="none" stroke-linejoin="round"/><path d="M636.4 141.0 L636.4 247.0" stroke="#fdfdfb" stroke-width="1.3" fill="none" stroke-linejoin="round"/><path d="M639.2 141.0 L639.2 247.0" stroke="#fdfdfb" stroke-width="1.3" fill="none" stroke-linejoin="round"/><path d="M662.8 141.0 L662.8 247.0" stroke="#fdfdfb" stroke-width="1.3" fill="none" stroke-linejoin="round"/><path d="M665.5 141.0 L665.5 247.0" stroke="#fdfdfb" stroke-width="1.3" fill="none" stroke-linejoin="round"/><path d="M692.7 141.0 L692.7 247.0" stroke="#fdfdfb" stroke-width="1.3" fill="none" stroke-linejoin="round"/><path d="M694.5 141.0 L694.5 247.0" stroke="#fdfdfb" stroke-width="1.3" fill="none" stroke-linejoin="round"/><path d="M723.7 141.0 L723.7 247.0" stroke="#fdfdfb" stroke-width="1.3" fill="none" stroke-linejoin="round"/><path d="M747.0 141.0 L747.0 247.0" stroke="#fdfdfb" stroke-width="1.3" fill="none" stroke-linejoin="round"/><path d="M642.0 154.3 L720.0 154.3" stroke="#fdfdfb" stroke-width="1.2" fill="none" stroke-linejoin="round"/><path d="M561.0 165.2 L612.0 165.2" stroke="#fdfdfb" stroke-width="1.2" fill="none" stroke-linejoin="round"/><path d="M561.0 176.1 L720.0 176.1" stroke="#fdfdfb" stroke-width="1.2" fill="none" stroke-linejoin="round"/><path d="M561.0 181.6 L612.0 181.6" stroke="#fdfdfb" stroke-width="1.2" fill="none" stroke-linejoin="round"/><path d="M441.0 219.7 L720.0 219.7" stroke="#fdfdfb" stroke-width="1.2" fill="none" stroke-linejoin="round"/><path d="M561.0 227.9 L720.0 227.9" stroke="#fdfdfb" stroke-width="1.2" fill="none" stroke-linejoin="round"/><path d="M441.0 236.0 L720.0 236.0" stroke="#fdfdfb" stroke-width="1.2" fill="none" stroke-linejoin="round"/><path d="M441.0 161.6 L1219.0 161.6" stroke="#fdfdfb" stroke-width="1.6" fill="none" stroke-linejoin="round"/><path d="M441.0 208.8 L529.0 208.8" stroke="#fdfdfb" stroke-width="1.6" fill="none" stroke-linejoin="round"/><path d="M441.0 244.0 L1219.0 244.0" stroke="#fdfdfb" stroke-width="1.6" fill="none" stroke-linejoin="round"/><path d="M777.0 141.0 L777.0 247.0" stroke="#fdfdfb" stroke-width="1.4" fill="none" stroke-linejoin="round"/><path d="M834.0 141.0 L834.0 247.0" stroke="#fdfdfb" stroke-width="1.4" fill="none" stroke-linejoin="round"/><path d="M841.3 141.0 L841.3 247.0" stroke="#fdfdfb" stroke-width="1.4" fill="none" stroke-linejoin="round"/><path d="M890.0 141.0 L890.0 247.0" stroke="#fdfdfb" stroke-width="1.4" fill="none" stroke-linejoin="round"/><path d="M973.5 141.0 L973.5 247.0" stroke="#fdfdfb" stroke-width="1.4" fill="none" stroke-linejoin="round"/><path d="M1030.4 141.0 L1030.4 247.0" stroke="#fdfdfb" stroke-width="1.4" fill="none" stroke-linejoin="round"/><path d="M1113.0 141.0 L1113.0 247.0" stroke="#fdfdfb" stroke-width="1.4" fill="none" stroke-linejoin="round"/><path d="M1166.2 141.0 L1166.2 247.0" stroke="#fdfdfb" stroke-width="1.4" fill="none" stroke-linejoin="round"/><path d="M1179.1 141.0 L1179.1 247.0" stroke="#fdfdfb" stroke-width="1.4" fill="none" stroke-linejoin="round"/><path d="M778.9 141.7 L806.4 198.6 L835.0 247.0" stroke="#fdfdfb" stroke-width="1.5" fill="none" stroke-linejoin="round"/><path d="M835.8 141.7 L793.5 193.0" stroke="#fdfdfb" stroke-width="1.4" fill="none" stroke-linejoin="round"/><path d="M863.3 141.7 L841.3 183.9" stroke="#fdfdfb" stroke-width="1.4" fill="none" stroke-linejoin="round"/><path d="M898.2 141.7 L843.1 244.5" stroke="#fdfdfb" stroke-width="1.6" fill="none" stroke-linejoin="round"/><path d="M929.4 141.7 L912.9 171.0" stroke="#fdfdfb" stroke-width="1.4" fill="none" stroke-linejoin="round"/><path d="M865.0 141.7 L942.3 183.9" stroke="#fdfdfb" stroke-width="1.6" fill="none" stroke-linejoin="round"/><path d="M990.0 141.7 L971.6 161.9" stroke="#fdfdfb" stroke-width="1.4" fill="none" stroke-linejoin="round"/><path d="M1013.9 141.7 L982.6 204.0" stroke="#fdfdfb" stroke-width="1.5" fill="none" stroke-linejoin="round"/><path d="M1115.0 149.0 L1219.0 149.0" stroke="#fdfdfb" stroke-width="1.4" fill="none" stroke-linejoin="round"/><path d="M1053.0 160.0 L1113.0 160.0" stroke="#fdfdfb" stroke-width="1.4" fill="none" stroke-linejoin="round"/><path d="M1115.0 163.7 L1219.0 163.7" stroke="#fdfdfb" stroke-width="1.4" fill="none" stroke-linejoin="round"/><path d="M1053.0 174.7 L1113.0 174.7" stroke="#fdfdfb" stroke-width="1.4" fill="none" stroke-linejoin="round"/><path d="M755.0 202.3 L1030.0 202.3" stroke="#fdfdfb" stroke-width="1.4" fill="none" stroke-linejoin="round"/><path d="M1053.0 205.9 L1219.0 205.9" stroke="#fdfdfb" stroke-width="1.4" fill="none" stroke-linejoin="round"/><path d="M1030.0 211.4 L1053.0 211.4" stroke="#fdfdfb" stroke-width="1.4" fill="none" stroke-linejoin="round"/><path d="M1113.0 233.5 L1219.0 233.5" stroke="#fdfdfb" stroke-width="1.4" fill="none" stroke-linejoin="round"/><path d="M755.0 226.0 L1030.0 226.0" stroke="#fdfdfb" stroke-width="1.4" fill="none" stroke-linejoin="round"/><path d="M446.6 190.7 L446.9 227.9" stroke="#fdfdfb" stroke-width="0.9" fill="none" stroke-linejoin="round"/><path d="M455.6 141.0 L454.5 244.0" stroke="#fdfdfb" stroke-width="0.9" fill="none" stroke-linejoin="round"/><path d="M463.2 141.0 L463.9 208.8" stroke="#fdfdfb" stroke-width="0.9" fill="none" stroke-linejoin="round"/><path d="M473.1 161.6 L473.1 244.0" stroke="#fdfdfb" stroke-width="0.9" fill="none" stroke-linejoin="round"/><path d="M481.8 141.0 L481.4 208.8" stroke="#fdfdfb" stroke-width="0.9" fill="none" stroke-linejoin="round"/><path d="M491.5 208.8 L490.1 247.0" stroke="#fdfdfb" stroke-width="0.9" fill="none" stroke-linejoin="round"/><path d="M499.3 208.8 L500.9 247.0" stroke="#fdfdfb" stroke-width="0.9" fill="none" stroke-linejoin="round"/><path d="M509.5 141.0 L509.9 208.8" stroke="#fdfdfb" stroke-width="0.9" fill="none" stroke-linejoin="round"/><path d="M517.6 161.6 L518.9 208.8" stroke="#fdfdfb" stroke-width="0.9" fill="none" stroke-linejoin="round"/><path d="M527.9 161.6 L527.4 208.8" stroke="#fdfdfb" stroke-width="0.9" fill="none" stroke-linejoin="round"/><path d="M535.0 208.8 L535.8 227.9" stroke="#fdfdfb" stroke-width="0.9" fill="none" stroke-linejoin="round"/><path d="M544.1 161.6 L544.6 227.9" stroke="#fdfdfb" stroke-width="0.9" fill="none" stroke-linejoin="round"/><path d="M554.4 141.0 L553.7 247.0" stroke="#fdfdfb" stroke-width="0.9" fill="none" stroke-linejoin="round"/><path d="M563.6 190.7 L563.0 227.9" stroke="#fdfdfb" stroke-width="0.9" fill="none" stroke-linejoin="round"/><path d="M572.0 190.7 L572.4 208.8" stroke="#fdfdfb" stroke-width="0.9" fill="none" stroke-linejoin="round"/><path d="M582.0 141.0 L580.0 227.9" stroke="#fdfdfb" stroke-width="0.9" fill="none" stroke-linejoin="round"/><path d="M589.0 190.7 L590.6 244.0" stroke="#fdfdfb" stroke-width="0.9" fill="none" stroke-linejoin="round"/><path d="M599.2 190.7 L598.0 244.0" stroke="#fdfdfb" stroke-width="0.9" fill="none" stroke-linejoin="round"/><path d="M608.2 141.0 L608.9 208.8" stroke="#fdfdfb" stroke-width="0.9" fill="none" stroke-linejoin="round"/><path d="M617.9 141.0 L617.9 208.8" stroke="#fdfdfb" stroke-width="0.9" fill="none" stroke-linejoin="round"/><path d="M625.7 190.7 L626.0 247.0" stroke="#fdfdfb" stroke-width="0.9" fill="none" stroke-linejoin="round"/><path d="M635.2 208.8 L635.6 247.0" stroke="#fdfdfb" stroke-width="0.9" fill="none" stroke-linejoin="round"/><path d="M643.1 190.7 L644.9 227.9" stroke="#fdfdfb" stroke-width="0.9" fill="none" stroke-linejoin="round"/><path d="M652.7 141.0 L653.2 208.8" stroke="#fdfdfb" stroke-width="0.9" fill="none" stroke-linejoin="round"/><path d="M661.6 161.6 L662.4 227.9" stroke="#fdfdfb" stroke-width="0.9" fill="none" stroke-linejoin="round"/><path d="M671.4 141.0 L670.6 227.9" stroke="#fdfdfb" stroke-width="0.9" fill="none" stroke-linejoin="round"/><path d="M680.4 141.0 L679.6 208.8" stroke="#fdfdfb" stroke-width="0.9" fill="none" stroke-linejoin="round"/><path d="M689.4 208.8 L688.2 247.0" stroke="#fdfdfb" stroke-width="0.9" fill="none" stroke-linejoin="round"/><path d="M697.5 208.8 L698.2 247.0" stroke="#fdfdfb" stroke-width="0.9" fill="none" stroke-linejoin="round"/><path d="M707.3 190.7 L706.3 244.0" stroke="#fdfdfb" stroke-width="0.9" fill="none" stroke-linejoin="round"/><path d="M715.7 141.0 L715.4 244.0" stroke="#fdfdfb" stroke-width="0.9" fill="none" stroke-linejoin="round"/><path d="M724.2 161.6 L724.9 244.0" stroke="#fdfdfb" stroke-width="0.9" fill="none" stroke-linejoin="round"/><path d="M734.7 161.6 L733.6 190.7" stroke="#fdfdfb" stroke-width="0.9" fill="none" stroke-linejoin="round"/><path d="M743.7 208.8 L744.0 247.0" stroke="#fdfdfb" stroke-width="0.9" fill="none" stroke-linejoin="round"/><path d="M752.4 208.8 L751.6 244.0" stroke="#fdfdfb" stroke-width="0.9" fill="none" stroke-linejoin="round"/><path d="M779.6 141.0 L779.1 244.0" stroke="#fdfdfb" stroke-width="0.9" fill="none" stroke-linejoin="round"/><path d="M796.2 190.7 L796.5 208.8" stroke="#fdfdfb" stroke-width="0.9" fill="none" stroke-linejoin="round"/><path d="M806.6 190.7 L806.5 247.0" stroke="#fdfdfb" stroke-width="0.9" fill="none" stroke-linejoin="round"/><path d="M814.7 141.0 L815.4 227.9" stroke="#fdfdfb" stroke-width="0.9" fill="none" stroke-linejoin="round"/><path d="M842.3 190.7 L842.2 227.9" stroke="#fdfdfb" stroke-width="0.9" fill="none" stroke-linejoin="round"/><path d="M860.3 190.7 L859.9 227.9" stroke="#fdfdfb" stroke-width="0.9" fill="none" stroke-linejoin="round"/><path d="M868.5 190.7 L868.7 227.9" stroke="#fdfdfb" stroke-width="0.9" fill="none" stroke-linejoin="round"/><path d="M878.8 208.8 L877.3 227.9" stroke="#fdfdfb" stroke-width="0.9" fill="none" stroke-linejoin="round"/><path d="M887.9 208.8 L887.0 227.9" stroke="#fdfdfb" stroke-width="0.9" fill="none" stroke-linejoin="round"/><path d="M896.7 161.6 L896.9 208.8" stroke="#fdfdfb" stroke-width="0.9" fill="none" stroke-linejoin="round"/><path d="M914.2 208.8 L914.9 247.0" stroke="#fdfdfb" stroke-width="0.9" fill="none" stroke-linejoin="round"/><path d="M923.2 208.8 L923.5 227.9" stroke="#fdfdfb" stroke-width="0.9" fill="none" stroke-linejoin="round"/><path d="M931.3 141.0 L931.9 208.8" stroke="#fdfdfb" stroke-width="0.9" fill="none" stroke-linejoin="round"/><path d="M941.3 161.6 L940.1 208.8" stroke="#fdfdfb" stroke-width="0.9" fill="none" stroke-linejoin="round"/><path d="M1030.1 208.8 L1030.4 247.0" stroke="#fdfdfb" stroke-width="0.9" fill="none" stroke-linejoin="round"/><path d="M1039.7 190.7 L1040.9 247.0" stroke="#fdfdfb" stroke-width="0.9" fill="none" stroke-linejoin="round"/><path d="M1049.4 208.8 L1049.1 247.0" stroke="#fdfdfb" stroke-width="0.9" fill="none" stroke-linejoin="round"/><path d="M1058.2 141.0 L1057.2 247.0" stroke="#fdfdfb" stroke-width="0.9" fill="none" stroke-linejoin="round"/><path d="M1066.6 190.7 L1066.7 247.0" stroke="#fdfdfb" stroke-width="0.9" fill="none" stroke-linejoin="round"/><path d="M1075.8 161.6 L1076.1 244.0" stroke="#fdfdfb" stroke-width="0.9" fill="none" stroke-linejoin="round"/><path d="M1084.3 190.7 L1085.2 244.0" stroke="#fdfdfb" stroke-width="0.9" fill="none" stroke-linejoin="round"/><path d="M1094.9 208.8 L1094.2 247.0" stroke="#fdfdfb" stroke-width="0.9" fill="none" stroke-linejoin="round"/><path d="M1102.8 190.7 L1102.7 247.0" stroke="#fdfdfb" stroke-width="0.9" fill="none" stroke-linejoin="round"/><path d="M1112.3 161.6 L1112.8 227.9" stroke="#fdfdfb" stroke-width="0.9" fill="none" stroke-linejoin="round"/><path d="M1120.9 208.8 L1120.5 244.0" stroke="#fdfdfb" stroke-width="0.9" fill="none" stroke-linejoin="round"/><path d="M1130.9 190.7 L1129.8 244.0" stroke="#fdfdfb" stroke-width="0.9" fill="none" stroke-linejoin="round"/><path d="M1139.2 161.6 L1139.5 247.0" stroke="#fdfdfb" stroke-width="0.9" fill="none" stroke-linejoin="round"/><path d="M1147.5 190.7 L1147.0 244.0" stroke="#fdfdfb" stroke-width="0.9" fill="none" stroke-linejoin="round"/><path d="M1157.9 190.7 L1156.3 244.0" stroke="#fdfdfb" stroke-width="0.9" fill="none" stroke-linejoin="round"/><path d="M1166.3 141.0 L1166.9 190.7" stroke="#fdfdfb" stroke-width="0.9" fill="none" stroke-linejoin="round"/><path d="M1174.1 161.6 L1174.3 227.9" stroke="#fdfdfb" stroke-width="0.9" fill="none" stroke-linejoin="round"/><path d="M1184.0 208.8 L1184.1 247.0" stroke="#fdfdfb" stroke-width="0.9" fill="none" stroke-linejoin="round"/><path d="M1193.6 161.6 L1192.5 244.0" stroke="#fdfdfb" stroke-width="0.9" fill="none" stroke-linejoin="round"/><path d="M1202.4 190.7 L1201.6 208.8" stroke="#fdfdfb" stroke-width="0.9" fill="none" stroke-linejoin="round"/><path d="M1212.0 208.8 L1211.0 247.0" stroke="#fdfdfb" stroke-width="0.9" fill="none" stroke-linejoin="round"/><path d="M1096.4 150.0 L1160.4 150.0" stroke="#fdfdfb" stroke-width="0.9" fill="none" stroke-linejoin="round"/><path d="M1120.3 150.0 L1141.1 150.0" stroke="#fdfdfb" stroke-width="0.9" fill="none" stroke-linejoin="round"/><path d="M536.7 150.0 L570.8 150.0" stroke="#fdfdfb" stroke-width="0.9" fill="none" stroke-linejoin="round"/><path d="M978.4 150.0 L1029.1 150.0" stroke="#fdfdfb" stroke-width="0.9" fill="none" stroke-linejoin="round"/><path d="M996.0 150.0 L1017.4 150.0" stroke="#fdfdfb" stroke-width="0.9" fill="none" stroke-linejoin="round"/><path d="M706.5 150.0 L760.6 150.0" stroke="#fdfdfb" stroke-width="0.9" fill="none" stroke-linejoin="round"/><path d="M1057.8 172.0 L1084.4 172.0" stroke="#fdfdfb" stroke-width="0.9" fill="none" stroke-linejoin="round"/><path d="M443.2 172.0 L490.8 172.0" stroke="#fdfdfb" stroke-width="0.9" fill="none" stroke-linejoin="round"/><path d="M961.5 172.0 L986.9 172.0" stroke="#fdfdfb" stroke-width="0.9" fill="none" stroke-linejoin="round"/><path d="M962.8 172.0 L992.3 172.0" stroke="#fdfdfb" stroke-width="0.9" fill="none" stroke-linejoin="round"/><path d="M767.1 172.0 L827.5 172.0" stroke="#fdfdfb" stroke-width="0.9" fill="none" stroke-linejoin="round"/><path d="M892.5 172.0 L947.0 172.0" stroke="#fdfdfb" stroke-width="0.9" fill="none" stroke-linejoin="round"/><path d="M1164.5 183.0 L1217.0 183.0" stroke="#fdfdfb" stroke-width="0.9" fill="none" stroke-linejoin="round"/><path d="M1092.7 183.0 L1154.8 183.0" stroke="#fdfdfb" stroke-width="0.9" fill="none" stroke-linejoin="round"/><path d="M802.1 183.0 L856.2 183.0" stroke="#fdfdfb" stroke-width="0.9" fill="none" stroke-linejoin="round"/><path d="M987.2 183.0 L1052.1 183.0" stroke="#fdfdfb" stroke-width="0.9" fill="none" stroke-linejoin="round"/><path d="M794.0 183.0 L851.9 183.0" stroke="#fdfdfb" stroke-width="0.9" fill="none" stroke-linejoin="round"/><path d="M671.5 183.0 L691.6 183.0" stroke="#fdfdfb" stroke-width="0.9" fill="none" stroke-linejoin="round"/><path d="M1032.3 199.0 L1081.4 199.0" stroke="#fdfdfb" stroke-width="0.9" fill="none" stroke-linejoin="round"/><path d="M933.1 199.0 L976.8 199.0" stroke="#fdfdfb" stroke-width="0.9" fill="none" stroke-linejoin="round"/><path d="M677.0 199.0 L705.3 199.0" stroke="#fdfdfb" stroke-width="0.9" fill="none" stroke-linejoin="round"/><path d="M968.7 199.0 L1033.1 199.0" stroke="#fdfdfb" stroke-width="0.9" fill="none" stroke-linejoin="round"/><path d="M1179.4 199.0 L1226.3 199.0" stroke="#fdfdfb" stroke-width="0.9" fill="none" stroke-linejoin="round"/><path d="M764.0 199.0 L811.1 199.0" stroke="#fdfdfb" stroke-width="0.9" fill="none" stroke-linejoin="round"/><path d="M477.9 217.0 L534.5 217.0" stroke="#fdfdfb" stroke-width="0.9" fill="none" stroke-linejoin="round"/><path d="M643.8 217.0 L668.1 217.0" stroke="#fdfdfb" stroke-width="0.9" fill="none" stroke-linejoin="round"/><path d="M488.8 217.0 L555.9 217.0" stroke="#fdfdfb" stroke-width="0.9" fill="none" stroke-linejoin="round"/><path d="M693.8 217.0 L735.3 217.0" stroke="#fdfdfb" stroke-width="0.9" fill="none" stroke-linejoin="round"/><path d="M493.1 217.0 L533.4 217.0" stroke="#fdfdfb" stroke-width="0.9" fill="none" stroke-linejoin="round"/><path d="M810.4 217.0 L836.6 217.0" stroke="#fdfdfb" stroke-width="0.9" fill="none" stroke-linejoin="round"/><path d="M533.9 236.0 L584.6 236.0" stroke="#fdfdfb" stroke-width="0.9" fill="none" stroke-linejoin="round"/><path d="M1066.7 236.0 L1092.2 236.0" stroke="#fdfdfb" stroke-width="0.9" fill="none" stroke-linejoin="round"/><path d="M1120.2 236.0 L1189.9 236.0" stroke="#fdfdfb" stroke-width="0.9" fill="none" stroke-linejoin="round"/><path d="M976.7 236.0 L1018.6 236.0" stroke="#fdfdfb" stroke-width="0.9" fill="none" stroke-linejoin="round"/><path d="M580.0 236.0 L609.2 236.0" stroke="#fdfdfb" stroke-width="0.9" fill="none" stroke-linejoin="round"/><path d="M1049.8 236.0 L1073.1 236.0" stroke="#fdfdfb" stroke-width="0.9" fill="none" stroke-linejoin="round"/><rect x="447" y="163" width="162" height="26" fill="none" stroke="#fbf4da" stroke-width="0.9"/><rect x="612" y="163" width="106" height="26" fill="none" stroke="#fbf4da" stroke-width="0.9"/><rect x="447" y="210" width="162" height="33" fill="none" stroke="#fbf4da" stroke-width="0.9"/><rect x="612" y="210" width="106" height="33" fill="none" stroke="#fbf4da" stroke-width="0.9"/><rect x="950" y="163" width="102" height="41" fill="none" stroke="#fbf4da" stroke-width="0.9"/><rect x="1055" y="165" width="163" height="39" fill="none" stroke="#fbf4da" stroke-width="0.9"/><rect x="1055" y="207" width="163" height="36" fill="none" stroke="#fbf4da" stroke-width="0.9"/><path d="M376.7 141.0 L440.3 189.8" stroke="#faf0cc" stroke-width="3.6" fill="none" stroke-linejoin="round"/><path d="M441.0 190.7 L944.0 189.4" stroke="#faf0cc" stroke-width="3.6" fill="none" stroke-linejoin="round"/><path d="M522.0 192.5 L469.4 247.0" stroke="#faf0cc" stroke-width="3.4" fill="none" stroke-linejoin="round"/><path d="M441.2 141.0 L441.2 247.0" stroke="#faf0cc" stroke-width="2.8" fill="none" stroke-linejoin="round"/><path d="M610.0 141.0 L610.0 247.0" stroke="#faf0cc" stroke-width="2.8" fill="none" stroke-linejoin="round"/><path d="M719.0 141.0 L719.0 247.0" stroke="#faf0cc" stroke-width="2.8" fill="none" stroke-linejoin="round"/><path d="M947.8 141.0 L947.8 247.0" stroke="#faf0cc" stroke-width="2.8" fill="none" stroke-linejoin="round"/><path d="M1053.3 141.0 L1053.3 247.0" stroke="#faf0cc" stroke-width="2.8" fill="none" stroke-linejoin="round"/><path d="M790.0 141.0 L790.0 247.0" stroke="#f8ebc0" stroke-width="6" fill="none" stroke-linejoin="round"/><path d="M1034.0 163.7 L1091.0 141.7" stroke="#e6e6e8" stroke-width="1.2" fill="none" stroke-linejoin="round"/><path d="M1142 141.7 Q1180 150 1219 162" stroke="#e6e6e8" stroke-width="1.2" fill="none"/><path d="M1158.9 141 Q1166 172 1175.4 185.7 Q1185 196 1192 200.4 Q1205 210 1219 218.8" stroke="#e0ecef" stroke-width="4" fill="none"/><text x="0" y="0" transform="translate(792.5 239.5) rotate(-90)" font-family="Liberation Sans" font-size="11" fill="#b3b5ba">Harbor Freeway</text><rect x="299" y="245" width="920" height="2" fill="#fbfbfb"/></svg>
<div class="a" style="left:275px;top:75px;width:974px;height:66px;background:#efefef"></div>
<div class="t" style="left:297.05px;top:82.50px;font-size:13px;color:#333;font-weight:normal;letter-spacing:1.040px;">Title*</div>
<div class="t" style="left:294.00px;top:101.19px;font-size:36px;color:#1c1c1c;font-weight:normal;letter-spacing:0.050px;-webkit-text-stroke:0.9px #1c1c1c">Fuel Level Monitoring</div>
<div class="t" style="left:306.50px;top:273.50px;font-size:18px;color:#8c8c8c;font-weight:normal;letter-spacing:0.354px;-webkit-text-stroke:0.5px #8c8c8c">Filter alarms</div>
<svg style="left:414.00px;top:270.00px" width="24" height="24" viewBox="0 0 24 24" ><path fill="#a8a8a8" d="M16.59 8.59L12 13.17 7.41 8.59 6 10l6 6 6-6z"/></svg>
<div class="t" style="left:1011.00px;top:274.35px;font-size:16px;color:#9da1ea;font-weight:bold;letter-spacing:-0.140px;">Disable all</div>
<div class="a" style="left:1101px;top:262px;width:107px;height:40px;border:1px solid #e6e6e6;border-radius:4px"></div>
<div class="t" style="left:1118.00px;top:274.35px;font-size:16px;color:#9da1ea;font-weight:bold;letter-spacing:-0.278px;">Enable all</div>
<div class="a" style="left:312px;top:329px;width:447px;height:171px;background:#f7f7f7;border-radius:10px"></div>
<div class="a" style="left:772px;top:329px;width:447px;height:171px;background:#f7f7f7;border-radius:10px"></div>
<svg style="left:0;top:0" width="1" height="1"><g fill="none" stroke="#808080" stroke-width="2.4"><path d="M326 364 L331.5 369.5 L343.5 357.5"/></g><path d="M325.7 412 V430.3 H339 V412" fill="none" stroke="#808080" stroke-width="2"/><path d="M332.4 419 Q335.3 423 335.3 425 A2.9 2.9 0 0 1 329.5 425 Q329.5 423 332.4 419z" fill="#808080"/><rect x="343.3" y="412" width="2.6" height="10.5" fill="#808080"/><rect x="343.3" y="424.5" width="2.6" height="2.6" fill="#808080"/><rect x="324.2" y="469.5" width="10.6" height="18.4" rx="1.5" fill="none" stroke="#808080" stroke-width="2"/><rect x="327" y="467" width="5" height="2.5" fill="#808080"/><rect x="326.5" y="481.5" width="6" height="4.3" fill="#808080"/><path d="M342.5 469.5 L337 479.5 L340.5 479.5 L338.5 488 L345.5 476.5 L342 476.5 L344.5 469.5z" fill="#808080"/></svg>
<svg style="left:0;top:0" width="1" height="1"><rect x="788.6" y="352.7" width="6.6" height="14" rx="3.3" fill="#808080"/><circle cx="791.9" cy="368.9" r="5.3" fill="#808080"/><rect x="790.4" y="354.5" width="3" height="10" rx="1.5" fill="#f7f7f7"/><rect x="798.7" y="358.2" width="3" height="7.5" fill="#808080"/><rect x="798.7" y="367.2" width="3" height="3" fill="#808080"/></svg>
<svg style="left:0;top:0" width="1" height="1"><rect x="788.6" y="410.2" width="6.6" height="14" rx="3.3" fill="#808080"/><circle cx="791.9" cy="426.4" r="5.3" fill="#808080"/><rect x="790.4" y="412.0" width="3" height="6" rx="1.5" fill="#f7f7f7"/><rect x="798.7" y="415.7" width="3" height="7.5" fill="#808080"/><rect x="798.7" y="424.7" width="3" height="3" fill="#808080"/></svg>
<svg style="left:0;top:0" width="1" height="1"><g fill="none" stroke="#808080" stroke-width="2.2" stroke-linecap="round"><path d="M782.5 472 Q787 468.5 791 468.5"/><path d="M805 472 Q800.5 468.5 796.5 468.5"/><path d="M786.5 476.5 Q788.5 474.5 790.5 474"/><path d="M801 476.5 Q799 474.5 797 474"/><path d="M789.5 481 l1 -1"/><path d="M798 481 l-1 -1"/></g><rect x="792.3" y="467.6" width="3" height="14" rx="1.5" fill="#808080"/><circle cx="793.8" cy="486" r="2" fill="#808080"/></svg>
<div class="t" style="left:355.65px;top:356.05px;font-size:16px;color:#8c8c8c;font-weight:normal;letter-spacing:0.069px;">No alarms</div>
<div class="t" style="left:815.05px;top:356.15px;font-size:16px;color:#8c8c8c;font-weight:normal;letter-spacing:0.068px;">Low temperature</div>
<div class="a" style="left:703.5px;top:348.5px;width:47px;height:27px;background:#c8c9f6;border-radius:14px"></div>
<div class="a" style="left:727.0px;top:350.5px;width:23px;height:23px;background:#fff;border-radius:50%;box-shadow:0 0 0 1.2px #c3c4f4"></div>
<div class="a" style="left:1163.5px;top:348.5px;width:47px;height:27px;background:#c8c9f6;border-radius:14px"></div>
<div class="a" style="left:1187.0px;top:350.5px;width:23px;height:23px;background:#fff;border-radius:50%;box-shadow:0 0 0 1.2px #c3c4f4"></div>
<div class="t" style="left:355.65px;top:414.25px;font-size:16px;color:#8c8c8c;font-weight:normal;letter-spacing:-0.006px;">Low remaning level</div>
<div class="t" style="left:815.05px;top:413.95px;font-size:16px;color:#8c8c8c;font-weight:normal;letter-spacing:0.083px;">High temperature</div>
<div class="a" style="left:703.5px;top:407.5px;width:47px;height:27px;background:#c8c9f6;border-radius:14px"></div>
<div class="a" style="left:727.0px;top:409.5px;width:23px;height:23px;background:#fff;border-radius:50%;box-shadow:0 0 0 1.2px #c3c4f4"></div>
<div class="a" style="left:1163.5px;top:407.5px;width:47px;height:27px;background:#c8c9f6;border-radius:14px"></div>
<div class="a" style="left:1187.0px;top:409.5px;width:23px;height:23px;background:#fff;border-radius:50%;box-shadow:0 0 0 1.2px #c3c4f4"></div>
<div class="t" style="left:355.65px;top:471.35px;font-size:16px;color:#8c8c8c;font-weight:normal;letter-spacing:0.060px;">Low battery</div>
<div class="t" style="left:815.55px;top:471.05px;font-size:16px;color:#8c8c8c;font-weight:normal;letter-spacing:0.367px;">Offline</div>
<div class="a" style="left:703.5px;top:464.5px;width:47px;height:27px;background:#c8c9f6;border-radius:14px"></div>
<div class="a" style="left:727.0px;top:466.5px;width:23px;height:23px;background:#fff;border-radius:50%;box-shadow:0 0 0 1.2px #c3c4f4"></div>
<div class="a" style="left:1163.5px;top:464.5px;width:47px;height:27px;background:#c8c9f6;border-radius:14px"></div>
<div class="a" style="left:1187.0px;top:466.5px;width:23px;height:23px;background:#fff;border-radius:50%;box-shadow:0 0 0 1.2px #c3c4f4"></div>
<div class="a" style="left:293px;top:524px;width:932px;height:451px;background:#fff;border:1px solid #1493e4;border-radius:8px"></div>
<div class="t" style="left:319.35px;top:549.50px;font-size:18px;color:#232323;font-weight:bold;letter-spacing:-1.088px;">Tanks</div>
<div class="t" style="left:315.15px;top:600.30px;font-size:13px;color:#9a9a9a;font-weight:normal;letter-spacing:0.017px;-webkit-text-stroke:0.45px #9a9a9a">Tank</div>
<div class="t" style="left:400.50px;top:600.30px;font-size:13px;color:#9a9a9a;font-weight:normal;letter-spacing:-0.050px;-webkit-text-stroke:0.45px #9a9a9a">Remaining, %</div>
<div class="t" style="left:718.65px;top:600.30px;font-size:13px;color:#9a9a9a;font-weight:normal;letter-spacing:0.225px;-webkit-text-stroke:0.45px #9a9a9a">Temperature</div>
<div class="t" style="left:850.40px;top:600.30px;font-size:13px;color:#9a9a9a;font-weight:normal;letter-spacing:0.358px;-webkit-text-stroke:0.45px #9a9a9a">Battery</div>
<div class="t" style="left:942.65px;top:600.30px;font-size:13px;color:#9a9a9a;font-weight:normal;letter-spacing:0.306px;-webkit-text-stroke:0.45px #9a9a9a">Connection</div>
<div class="a" style="left:302px;top:637px;width:907px;height:1px;background:#dcdcdc"></div>
<div class="a" style="left:294px;top:638px;width:915px;height:327px;overflow:hidden">
<div class="t" style="left:21.75px;top:11.25px;font-size:16px;color:#454a50;font-weight:normal;letter-spacing:-0.500px;">Tank</div>
<div class="t" style="left:20.75px;top:33.25px;font-size:16px;color:#454a50;font-weight:normal;letter-spacing:0.167px;">1133</div>
<div class="t" style="left:111.20px;top:22.25px;font-size:16px;color:#d12730;font-weight:bold;letter-spacing:-0.525px;">8% (13497L)</div>
<div class="a" style="left:273px;top:20.000000000000046px;width:110px;height:18px;background:#fcecec;border-radius:5px"></div>
<div class="a" style="left:273px;top:20.000000000000046px;width:10px;height:18px;background:#d12730;border-radius:5px 0 0 5px"></div>
<div class="t" style="left:424.15px;top:22.25px;font-size:16px;color:#454a50;font-weight:normal;letter-spacing:-0.775px;">25 °C</div>
<div class="t" style="left:557.15px;top:22.25px;font-size:16px;color:#454a50;font-weight:normal;letter-spacing:-1.525px;">65%</div>
<div class="a" style="left:649px;top:13.700000000000045px;width:66px;height:30px;background:#fbeced;border-radius:8px"></div>
<div class="t" style="left:657.65px;top:22.25px;font-size:16px;color:#c62a2f;font-weight:bold;letter-spacing:-0.408px;">Offline</div>
<svg style="left:809.10px;top:15.20px" width="27.5" height="27.5" viewBox="0 0 24 24" ><path fill="#9e9e9e" d="M3 17.25V21h3.75L17.81 9.94l-3.75-3.75L3 17.25zM20.71 7.04c.39-.39.39-1.02 0-1.41l-2.34-2.34c-.39-.39-1.02-.39-1.41 0l-1.83 1.83 3.75 3.75 1.83-1.83z"/></svg>
<svg style="left:862.40px;top:15.20px" width="27.5" height="27.5" viewBox="0 0 24 24" ><path fill="#9e9e9e" d="M6 19c0 1.1.9 2 2 2h8c1.1 0 2-.9 2-2V7H6v12zM19 4h-3.5l-1-1h-5l-1 1H5v2h14V4z"/></svg>
<div class="t" style="left:21.75px;top:68.25px;font-size:16px;color:#454a50;font-weight:normal;letter-spacing:-0.500px;">Tank</div>
<div class="t" style="left:20.75px;top:90.25px;font-size:16px;color:#454a50;font-weight:normal;letter-spacing:-0.250px;">1491</div>
<div class="t" style="left:111.45px;top:79.25px;font-size:16px;color:#454a50;font-weight:normal;letter-spacing:-0.495px;">43% (22574L)</div>
<div class="a" style="left:273px;top:77.00000000000004px;width:110px;height:18px;background:#e8e8fb;border-radius:5px"></div>
<div class="a" style="left:273px;top:77.00000000000004px;width:47px;height:18px;background:#b7b8f3;border-radius:5px 0 0 5px"></div>
<div class="t" style="left:424.15px;top:79.25px;font-size:16px;color:#454a50;font-weight:normal;letter-spacing:-0.900px;">6 °C</div>
<div class="t" style="left:557.65px;top:79.25px;font-size:16px;color:#454a50;font-weight:normal;letter-spacing:-1.775px;">43%</div>
<div class="a" style="left:649px;top:70.70000000000005px;width:66px;height:30px;background:#fbeced;border-radius:8px"></div>
<div class="t" style="left:657.65px;top:79.25px;font-size:16px;color:#c62a2f;font-weight:bold;letter-spacing:-0.408px;">Offline</div>
<svg style="left:809.10px;top:72.20px" width="27.5" height="27.5" viewBox="0 0 24 24" ><path fill="#9e9e9e" d="M3 17.25V21h3.75L17.81 9.94l-3.75-3.75L3 17.25zM20.71 7.04c.39-.39.39-1.02 0-1.41l-2.34-2.34c-.39-.39-1.02-.39-1.41 0l-1.83 1.83 3.75 3.75 1.83-1.83z"/></svg>
<svg style="left:862.40px;top:72.20px" width="27.5" height="27.5" viewBox="0 0 24 24" ><path fill="#9e9e9e" d="M6 19c0 1.1.9 2 2 2h8c1.1 0 2-.9 2-2V7H6v12zM19 4h-3.5l-1-1h-5l-1 1H5v2h14V4z"/></svg>
<div class="t" style="left:21.75px;top:125.25px;font-size:16px;color:#454a50;font-weight:normal;letter-spacing:-0.500px;">Tank</div>
<div class="t" style="left:20.75px;top:147.25px;font-size:16px;color:#454a50;font-weight:normal;letter-spacing:-0.250px;">1305</div>
<div class="t" style="left:110.95px;top:136.25px;font-size:16px;color:#454a50;font-weight:normal;letter-spacing:-0.450px;">82% (23417L)</div>
<div class="a" style="left:273px;top:134.00000000000006px;width:110px;height:18px;background:#e8e8fb;border-radius:5px"></div>
<div class="a" style="left:273px;top:134.00000000000006px;width:90px;height:18px;background:#b7b8f3;border-radius:5px 0 0 5px"></div>
<div class="t" style="left:424.15px;top:136.25px;font-size:16px;color:#454a50;font-weight:normal;letter-spacing:-0.900px;">7 °C</div>
<div class="t" style="left:557.15px;top:136.25px;font-size:16px;color:#454a50;font-weight:normal;letter-spacing:-1.525px;">53%</div>
<div class="a" style="left:649px;top:127.70000000000005px;width:66px;height:30px;background:#fbeced;border-radius:8px"></div>
<div class="t" style="left:657.65px;top:136.25px;font-size:16px;color:#c62a2f;font-weight:bold;letter-spacing:-0.408px;">Offline</div>
<svg style="left:809.10px;top:129.20px" width="27.5" height="27.5" viewBox="0 0 24 24" ><path fill="#9e9e9e" d="M3 17.25V21h3.75L17.81 9.94l-3.75-3.75L3 17.25zM20.71 7.04c.39-.39.39-1.02 0-1.41l-2.34-2.34c-.39-.39-1.02-.39-1.41 0l-1.83 1.83 3.75 3.75 1.83-1.83z"/></svg>
<svg style="left:862.40px;top:129.20px" width="27.5" height="27.5" viewBox="0 0 24 24" ><path fill="#9e9e9e" d="M6 19c0 1.1.9 2 2 2h8c1.1 0 2-.9 2-2V7H6v12zM19 4h-3.5l-1-1h-5l-1 1H5v2h14V4z"/></svg>
<div class="t" style="left:21.75px;top:182.25px;font-size:16px;color:#454a50;font-weight:normal;letter-spacing:-0.500px;">Tank</div>
<div class="t" style="left:20.75px;top:204.25px;font-size:16px;color:#454a50;font-weight:normal;letter-spacing:-0.250px;">1273</div>
<div class="t" style="left:110.95px;top:193.25px;font-size:16px;color:#454a50;font-weight:normal;letter-spacing:-0.362px;">90% (8413gal)</div>
<div class="a" style="left:273px;top:191.00000000000006px;width:110px;height:18px;background:#e8e8fb;border-radius:5px"></div>
<div class="a" style="left:273px;top:191.00000000000006px;width:99px;height:18px;background:#b7b8f3;border-radius:5px 0 0 5px"></div>
<div class="t" style="left:424.15px;top:193.25px;font-size:16px;color:#454a50;font-weight:normal;letter-spacing:-0.775px;">25 °C</div>
<div class="t" style="left:557.15px;top:193.25px;font-size:16px;color:#454a50;font-weight:normal;letter-spacing:-1.525px;">25%</div>
<div class="a" style="left:649px;top:184.70000000000005px;width:66px;height:30px;background:#fbeced;border-radius:8px"></div>
<div class="t" style="left:657.65px;top:193.25px;font-size:16px;color:#c62a2f;font-weight:bold;letter-spacing:-0.408px;">Offline</div>
<svg style="left:809.10px;top:186.20px" width="27.5" height="27.5" viewBox="0 0 24 24" ><path fill="#9e9e9e" d="M3 17.25V21h3.75L17.81 9.94l-3.75-3.75L3 17.25zM20.71 7.04c.39-.39.39-1.02 0-1.41l-2.34-2.34c-.39-.39-1.02-.39-1.41 0l-1.83 1.83 3.75 3.75 1.83-1.83z"/></svg>
<svg style="left:862.40px;top:186.20px" width="27.5" height="27.5" viewBox="0 0 24 24" ><path fill="#9e9e9e" d="M6 19c0 1.1.9 2 2 2h8c1.1 0 2-.9 2-2V7H6v12zM19 4h-3.5l-1-1h-5l-1 1H5v2h14V4z"/></svg>
<div class="t" style="left:21.75px;top:239.75px;font-size:16px;color:#454a50;font-weight:normal;letter-spacing:-0.500px;">Tank</div>
<div class="t" style="left:20.75px;top:261.75px;font-size:16px;color:#454a50;font-weight:normal;letter-spacing:-0.250px;">1471</div>
<div class="t" style="left:110.95px;top:250.75px;font-size:16px;color:#454a50;font-weight:normal;letter-spacing:-0.450px;">64% (15688L)</div>
<div class="a" style="left:273px;top:248.50000000000006px;width:110px;height:18px;background:#e8e8fb;border-radius:5px"></div>
<div class="a" style="left:273px;top:248.50000000000006px;width:70px;height:18px;background:#b7b8f3;border-radius:5px 0 0 5px"></div>
<div class="t" style="left:424.65px;top:250.75px;font-size:16px;color:#454a50;font-weight:normal;letter-spacing:-0.875px;">42 °C</div>
<div class="t" style="left:557.15px;top:250.75px;font-size:16px;color:#454a50;font-weight:normal;letter-spacing:-1.525px;">90%</div>
<div class="a" style="left:649px;top:242.20000000000005px;width:66px;height:30px;background:#fbeced;border-radius:8px"></div>
<div class="t" style="left:657.65px;top:250.75px;font-size:16px;color:#c62a2f;font-weight:bold;letter-spacing:-0.408px;">Offline</div>
<svg style="left:809.10px;top:243.70px" width="27.5" height="27.5" viewBox="0 0 24 24" ><path fill="#9e9e9e" d="M3 17.25V21h3.75L17.81 9.94l-3.75-3.75L3 17.25zM20.71 7.04c.39-.39.39-1.02 0-1.41l-2.34-2.34c-.39-.39-1.02-.39-1.41 0l-1.83 1.83 3.75 3.75 1.83-1.83z"/></svg>
<svg style="left:862.40px;top:243.70px" width="27.5" height="27.5" viewBox="0 0 24 24" ><path fill="#9e9e9e" d="M6 19c0 1.1.9 2 2 2h8c1.1 0 2-.9 2-2V7H6v12zM19 4h-3.5l-1-1h-5l-1 1H5v2h14V4z"/></svg>
<div class="t" style="left:21.75px;top:296.75px;font-size:16px;color:#454a50;font-weight:normal;letter-spacing:-0.500px;">Tank</div>
<div class="t" style="left:20.75px;top:318.75px;font-size:16px;color:#454a50;font-weight:normal;letter-spacing:0.167px;">1311</div>
<div class="t" style="left:110.95px;top:307.75px;font-size:16px;color:#454a50;font-weight:normal;letter-spacing:-0.357px;">55% (418265gal)</div>
<div class="a" style="left:273px;top:305.50000000000006px;width:110px;height:18px;background:#e8e8fb;border-radius:5px"></div>
<div class="a" style="left:273px;top:305.50000000000006px;width:60px;height:18px;background:#b7b8f3;border-radius:5px 0 0 5px"></div>
<div class="t" style="left:424.15px;top:307.75px;font-size:16px;color:#454a50;font-weight:normal;letter-spacing:-0.800px;">6 °C</div>
<div class="t" style="left:557.15px;top:307.75px;font-size:16px;color:#454a50;font-weight:normal;letter-spacing:-1.525px;">60%</div>
<div class="a" style="left:649px;top:299.20000000000005px;width:66px;height:30px;background:#fbeced;border-radius:8px"></div>
<div class="t" style="left:657.65px;top:307.75px;font-size:16px;color:#c62a2f;font-weight:bold;letter-spacing:-0.408px;">Offline</div>
<svg style="left:809.10px;top:300.70px" width="27.5" height="27.5" viewBox="0 0 24 24" ><path fill="#9e9e9e" d="M3 17.25V21h3.75L17.81 9.94l-3.75-3.75L3 17.25zM20.71 7.04c.39-.39.39-1.02 0-1.41l-2.34-2.34c-.39-.39-1.02-.39-1.41 0l-1.83 1.83 3.75 3.75 1.83-1.83z"/></svg>
<svg style="left:862.40px;top:300.70px" width="27.5" height="27.5" viewBox="0 0 24 24" ><path fill="#9e9e9e" d="M6 19c0 1.1.9 2 2 2h8c1.1 0 2-.9 2-2V7H6v12zM19 4h-3.5l-1-1h-5l-1 1H5v2h14V4z"/></svg>
</div>
<div class="a" style="left:1209px;top:577px;width:6px;height:262px;background:#d3d3d3"></div>
<div class="a" style="left:293px;top:993px;width:931px;height:400px;background:#fbfbfb;border-radius:8px"></div>
<div class="t" style="left:318.30px;top:1016.60px;font-size:18px;color:#9b9b9b;font-weight:normal;letter-spacing:-0.050px;">Alarms</div>
<div class="t" style="left:315.05px;top:1067.80px;font-size:13px;color:#c6c6c6;font-weight:normal;letter-spacing:0.017px;-webkit-text-stroke:0.35px #c6c6c6">Tank</div>
<div class="t" style="left:453.65px;top:1067.80px;font-size:13px;color:#c6c6c6;font-weight:normal;letter-spacing:0.232px;-webkit-text-stroke:0.35px #c6c6c6">Created time</div>
<svg style="left:0;top:0" width="1" height="1"><rect x="542.3" y="1069" width="2.7" height="10" fill="#ababab"/><path d="M539.2 1075.4 L543.65 1079.9 L548.1 1075.4" fill="none" stroke="#ababab" stroke-width="2.6"/></svg>
<div class="t" style="left:738.35px;top:1067.80px;font-size:13px;color:#c6c6c6;font-weight:normal;letter-spacing:0.033px;-webkit-text-stroke:0.35px #c6c6c6">Type</div>
<div class="t" style="left:966.00px;top:1067.80px;font-size:13px;color:#c6c6c6;font-weight:normal;letter-spacing:0.325px;-webkit-text-stroke:0.35px #c6c6c6">Details</div>
<div class="a" style="left:302px;top:1105px;width:913px;height:1px;background:#ececec"></div>
<div class="t" style="left:698.20px;top:1265.95px;font-size:16px;color:#a9a9a9;font-weight:bold;letter-spacing:-0.418px;">No alarms found</div>
<div class="a" style="left:1224px;top:75px;width:25px;height:1283px;background:linear-gradient(90deg,rgba(0,0,0,0) 0%,rgba(0,0,0,0.04) 50%,rgba(0,0,0,0.17) 100%)"></div>
<div class="a" style="left:1243px;top:429px;width:6px;height:845px;background:#b3b3b3"></div>
<div class="a" style="left:1249px;top:75px;width:1311px;height:1283px;background:#fff"></div>
<div class="a" style="left:1249px;top:75px;width:1311px;height:110px;background:#00695c"></div>
<div class="t" style="left:1275.20px;top:99.00px;font-size:26px;color:#fff;font-weight:normal;letter-spacing:0.750px;">Tanks</div>
<div class="t" style="left:1274.20px;top:139.30px;font-size:18px;color:rgba(255,255,255,0.82);font-weight:normal;letter-spacing:0.065px;">Entities table</div>
<div class="a" style="left:2251px;top:113px;width:166px;height:35px;background:rgba(0,0,0,0.1);border-radius:18px"></div>
<div class="t" style="left:2265.45px;top:122.15px;font-size:15px;color:rgba(255,255,255,0.85);font-weight:normal;letter-spacing:0.825px;">Basic</div>
<div class="a" style="left:2320px;top:116px;width:96px;height:29px;background:#fff;border-radius:15px"></div>
<div class="t" style="left:2332.75px;top:124.05px;font-size:14px;color:#00695c;font-weight:bold;letter-spacing:0.493px;">Advanced</div>
<svg style="left:2449.80px;top:116.80px" width="26.4" height="26.4" viewBox="0 0 24 24" ><path fill="#fff" d="M12 2C6.48 2 2 6.48 2 12s4.48 10 10 10 10-4.48 10-10S17.52 2 12 2zm1 17h-2v-2h2v2zm2.07-7.75l-.9.92C13.45 12.9 13 13.5 13 15h-2v-.5c0-1.1.45-2.1 1.17-2.83l1.24-1.26c.37-.36.59-.86.59-1.41 0-1.1-.9-2-2-2s-2 .9-2 2H8c0-2.21 1.79-4 4-4s4 1.79 4 4c0 .88-.36 1.68-.93 2.25z"/></svg>
<svg style="left:2502.40px;top:116.20px" width="27.2" height="27.2" viewBox="0 0 24 24" ><path fill="#fff" d="M19 6.41L17.59 5 12 10.59 6.41 5 5 6.41 10.59 12 5 17.59 6.41 19 12 13.41 17.59 19 19 17.59 13.41 12z"/></svg>
<div class="a" style="left:1275px;top:214px;width:529px;height:35px;background:#efefef;border-radius:18px"></div>
<div class="t" style="left:1298.75px;top:224.15px;font-size:16px;color:#9e9e9e;font-weight:normal;letter-spacing:-0.500px;">Data</div>
<div class="t" style="left:1376.75px;top:224.15px;font-size:16px;color:#9e9e9e;font-weight:normal;letter-spacing:-0.333px;">Appearance</div>
<div class="t" style="left:1505.00px;top:224.15px;font-size:16px;color:#9e9e9e;font-weight:normal;letter-spacing:-0.200px;">Widget card</div>
<div class="t" style="left:1731.75px;top:224.15px;font-size:16px;color:#9e9e9e;font-weight:normal;letter-spacing:-0.100px;">Layout</div>
<div class="a" style="left:1610px;top:216px;width:101px;height:31px;background:#00695c;border-radius:16px"></div>
<div class="t" style="left:1633.50px;top:225.45px;font-size:16px;color:#fff;font-weight:bold;letter-spacing:-0.750px;">Actions</div>
<svg style="left:2207.70px;top:221.40px" width="20" height="20" viewBox="0 0 24 24" ><path fill="#00695c" d="M12 4.5C7 4.5 2.73 7.61 1 12c1.73 4.39 6 7.5 11 7.5s9.27-3.11 11-7.5c-1.73-4.39-6-7.5-11-7.5zM12 17c-2.76 0-5-2.24-5-5s2.24-5 5-5 5 2.24 5 5-2.24 5-5 5zm0-8c-1.66 0-3 1.34-3 3s1.34 3 3 3 3-1.34 3-3-1.34-3-3-3z"/></svg>
<div class="t" style="left:2232.00px;top:224.05px;font-size:15px;color:#00695c;font-weight:bold;letter-spacing:0.208px;">Preview</div>
<div class="a" style="left:2313px;top:212px;width:110px;height:39px;border:1px solid #dcdcdc;border-radius:4px"></div>
<svg style="left:2326.00px;top:221.50px" width="20" height="20" viewBox="0 0 24 24" ><path fill="#a6a6a6" d="M19 6.41L17.59 5 12 10.59 6.41 5 5 6.41 10.59 12 5 17.59 6.41 19 12 13.41 17.59 19 19 17.59 13.41 12z"/></svg>
<div class="t" style="left:2350.55px;top:225.05px;font-size:16px;color:#a3a3a3;font-weight:normal;letter-spacing:0.000px;">Decline</div>
<div class="a" style="left:2436px;top:212px;width:98px;height:39px;background:#e0e0e0;border-radius:4px"></div>
<svg style="left:2448.50px;top:221.50px" width="20" height="20" viewBox="0 0 24 24" ><path fill="#a8a8a8" d="M9 16.17L4.83 12l-1.42 1.41L9 19 21 7l-1.41-1.41z"/></svg>
<div class="t" style="left:2476.00px;top:225.05px;font-size:16px;color:#a8a8a8;font-weight:normal;letter-spacing:-0.250px;">Apply</div>
<div class="a" style="left:1266px;top:269px;width:1276px;height:1071px;background:#fff;box-shadow:0 0 18px rgba(20,40,60,0.07)"></div>
<div class="t" style="left:1293.00px;top:294.03px;font-size:21px;color:#212121;font-weight:normal;letter-spacing:1.000px;">Actions</div>
<div class="a" style="left:2424px;top:278px;width:52px;height:52px;background:#f3f3f3;border-radius:50%"></div>
<svg style="left:2436.30px;top:290.30px" width="27.4" height="27.4" viewBox="0 0 24 24" ><path fill="#595959" d="M19 13h-6v6h-2v-6H5v-2h6V5h2v6h6v2z"/></svg>
<svg style="left:2489.10px;top:291.60px" width="27.4" height="27.4" viewBox="0 0 24 24" ><path fill="#595959" d="M15.5 14h-.79l-.28-.27C15.41 12.59 16 11.11 16 9.5 16 5.91 13.09 3 9.5 3S3 5.91 3 9.5 5.91 16 9.5 16c1.61 0 3.09-.59 4.23-1.57l.27.28v.79l5 4.99L20.49 19l-4.99-5zm-6 0C7.01 14 5 11.99 5 9.5S7.01 5 9.5 5 14 7.01 14 9.5 11.99 14 9.5 14z"/></svg>
<div class="t" style="left:1336.60px;top:363.05px;font-size:16px;color:#222;font-weight:bold;letter-spacing:-0.925px;">Action source</div>
<svg style="left:1436.80px;top:360.70px" width="17.4" height="17.4" viewBox="0 0 24 24" ><path fill="#555" d="M4 12l1.41 1.41L11 7.83V20h2V7.83l5.58 5.59L20 12l-8-8-8 8z"/></svg>
<div class="t" style="left:1548.30px;top:363.05px;font-size:16px;color:#222;font-weight:bold;letter-spacing:-0.600px;">Name</div>
<div class="t" style="left:1852.90px;top:363.05px;font-size:16px;color:#222;font-weight:bold;letter-spacing:-0.683px;">Icon</div>
<div class="t" style="left:1928.15px;top:363.05px;font-size:16px;color:#222;font-weight:bold;letter-spacing:-0.850px;">Type</div>
<div class="a" style="left:1266px;top:400px;width:1276px;height:1px;background:#dedede"></div>
<svg style="left:1279.00px;top:415.50px" width="28" height="28" viewBox="0 0 24 24" ><path fill="#6b6b6b" d="M20 9H4v2h16V9zM4 15h16v-2H4v2z"/></svg>
<div class="t" style="left:1337.10px;top:423.05px;font-size:16px;color:#262626;font-weight:normal;letter-spacing:-0.618px;">Action cell button</div>
<div class="t" style="left:1548.05px;top:423.05px;font-size:16px;color:#262626;font-weight:normal;letter-spacing:-0.803px;">Edit tank sensor</div>
<svg style="left:1852.50px;top:415.50px" width="28" height="28" viewBox="0 0 24 24" ><path fill="#6b6b6b" d="M3 17.25V21h3.75L17.81 9.94l-3.75-3.75L3 17.25zM20.71 7.04c.39-.39.39-1.02 0-1.41l-2.34-2.34c-.39-.39-1.02-.39-1.41 0l-1.83 1.83 3.75 3.75 1.83-1.83z"/></svg>
<div class="t" style="left:1927.65px;top:423.05px;font-size:16px;color:#262626;font-weight:normal;letter-spacing:-0.705px;">Custom action (with HTML template)</div>
<svg style="left:2435.90px;top:415.50px" width="28" height="28" viewBox="0 0 24 24" ><path fill="#6b6b6b" d="M3 17.25V21h3.75L17.81 9.94l-3.75-3.75L3 17.25zM20.71 7.04c.39-.39.39-1.02 0-1.41l-2.34-2.34c-.39-.39-1.02-.39-1.41 0l-1.83 1.83 3.75 3.75 1.83-1.83z"/></svg>
<svg style="left:2489.20px;top:415.50px" width="28" height="28" viewBox="0 0 24 24" ><path fill="#6b6b6b" d="M6 19c0 1.1.9 2 2 2h8c1.1 0 2-.9 2-2V7H6v12zM19 4h-3.5l-1-1h-5l-1 1H5v2h14V4z"/></svg>
<svg style="left:1279.00px;top:472.50px" width="28" height="28" viewBox="0 0 24 24" ><path fill="#6b6b6b" d="M20 9H4v2h16V9zM4 15h16v-2H4v2z"/></svg>
<div class="t" style="left:1337.10px;top:480.05px;font-size:16px;color:#262626;font-weight:normal;letter-spacing:-0.618px;">Action cell button</div>
<div class="t" style="left:1548.05px;top:480.05px;font-size:16px;color:#262626;font-weight:normal;letter-spacing:-0.850px;">Delete tank sensor</div>
<svg style="left:1852.50px;top:472.50px" width="28" height="28" viewBox="0 0 24 24" ><path fill="#6b6b6b" d="M6 19c0 1.1.9 2 2 2h8c1.1 0 2-.9 2-2V7H6v12zM19 4h-3.5l-1-1h-5l-1 1H5v2h14V4z"/></svg>
<div class="t" style="left:1927.65px;top:480.05px;font-size:16px;color:#262626;font-weight:normal;letter-spacing:-0.708px;">Custom action</div>
<svg style="left:2435.90px;top:472.50px" width="28" height="28" viewBox="0 0 24 24" ><path fill="#6b6b6b" d="M3 17.25V21h3.75L17.81 9.94l-3.75-3.75L3 17.25zM20.71 7.04c.39-.39.39-1.02 0-1.41l-2.34-2.34c-.39-.39-1.02-.39-1.41 0l-1.83 1.83 3.75 3.75 1.83-1.83z"/></svg>
<svg style="left:2489.20px;top:472.50px" width="28" height="28" viewBox="0 0 24 24" ><path fill="#6b6b6b" d="M6 19c0 1.1.9 2 2 2h8c1.1 0 2-.9 2-2V7H6v12zM19 4h-3.5l-1-1h-5l-1 1H5v2h14V4z"/></svg>
<svg style="left:1279.00px;top:529.50px" width="28" height="28" viewBox="0 0 24 24" ><path fill="#6b6b6b" d="M20 9H4v2h16V9zM4 15h16v-2H4v2z"/></svg>
<div class="t" style="left:1336.35px;top:537.05px;font-size:16px;color:#262626;font-weight:normal;letter-spacing:-0.873px;">On row click</div>
<div class="t" style="left:1548.05px;top:537.05px;font-size:16px;color:#262626;font-weight:normal;letter-spacing:-0.706px;">Navigate to details</div>
<svg style="left:1852.50px;top:529.50px" width="28" height="28" viewBox="0 0 24 24" ><path fill="#6b6b6b" d="M6 10c-1.1 0-2 .9-2 2s.9 2 2 2 2-.9 2-2-.9-2-2-2zm12 0c-1.1 0-2 .9-2 2s.9 2 2 2 2-.9 2-2-.9-2-2-2zm-6 0c-1.1 0-2 .9-2 2s.9 2 2 2 2-.9 2-2-.9-2-2-2z"/></svg>
<div class="t" style="left:1927.15px;top:537.05px;font-size:16px;color:#262626;font-weight:normal;letter-spacing:-0.790px;">Navigate to new dashboard state</div>
<svg style="left:2435.90px;top:529.50px" width="28" height="28" viewBox="0 0 24 24" ><path fill="#6b6b6b" d="M3 17.25V21h3.75L17.81 9.94l-3.75-3.75L3 17.25zM20.71 7.04c.39-.39.39-1.02 0-1.41l-2.34-2.34c-.39-.39-1.02-.39-1.41 0l-1.83 1.83 3.75 3.75 1.83-1.83z"/></svg>
<svg style="left:2489.20px;top:529.50px" width="28" height="28" viewBox="0 0 24 24" ><path fill="#6b6b6b" d="M6 19c0 1.1.9 2 2 2h8c1.1 0 2-.9 2-2V7H6v12zM19 4h-3.5l-1-1h-5l-1 1H5v2h14V4z"/></svg>
<svg style="left:1279.00px;top:586.50px" width="28" height="28" viewBox="0 0 24 24" ><path fill="#6b6b6b" d="M20 9H4v2h16V9zM4 15h16v-2H4v2z"/></svg>
<div class="t" style="left:1337.10px;top:594.05px;font-size:16px;color:#262626;font-weight:normal;letter-spacing:-0.874px;">Widget header button</div>
<div class="t" style="left:1549.30px;top:594.05px;font-size:16px;color:#262626;font-weight:normal;letter-spacing:-0.911px;">Add tank sensor</div>
<svg style="left:1852.50px;top:586.50px" width="28" height="28" viewBox="0 0 24 24" ><path fill="#6b6b6b" d="M19 13h-6v6h-2v-6H5v-2h6V5h2v6h6v2z"/></svg>
<div class="t" style="left:1927.65px;top:594.05px;font-size:16px;color:#262626;font-weight:normal;letter-spacing:-0.705px;">Custom action (with HTML template)</div>
<svg style="left:2435.90px;top:586.50px" width="28" height="28" viewBox="0 0 24 24" ><path fill="#6b6b6b" d="M3 17.25V21h3.75L17.81 9.94l-3.75-3.75L3 17.25zM20.71 7.04c.39-.39.39-1.02 0-1.41l-2.34-2.34c-.39-.39-1.02-.39-1.41 0l-1.83 1.83 3.75 3.75 1.83-1.83z"/></svg>
<svg style="left:2489.20px;top:586.50px" width="28" height="28" viewBox="0 0 24 24" ><path fill="#6b6b6b" d="M6 19c0 1.1.9 2 2 2h8c1.1 0 2-.9 2-2V7H6v12zM19 4h-3.5l-1-1h-5l-1 1H5v2h14V4z"/></svg>
<div class="a" style="left:1266px;top:1278px;width:1276px;height:1px;background:#e0e0e0"></div>
<div class="t" style="left:2092.75px;top:1304.05px;font-size:14px;color:#333;font-weight:normal;letter-spacing:0.164px;">Items per page:</div>
<div class="a" style="left:2200px;top:1287px;width:92px;height:45px;border:1px solid #a8a8a8;border-radius:4px"></div>
<div class="t" style="left:2217.50px;top:1304.05px;font-size:14px;color:#333;font-weight:normal;letter-spacing:0.500px;">10</div>
<svg style="left:2257.00px;top:1296.50px" width="26.4" height="26.4" viewBox="0 0 24 24" ><path fill="#6b6b6b" d="M7 10l5 5 5-5z"/></svg>
<div class="t" style="left:2331.60px;top:1302.95px;font-size:14px;color:#333;font-weight:normal;letter-spacing:0.256px;">1 – 4 of 4</div>
<svg style="left:2440.30px;top:1295.70px" width="28" height="28" viewBox="0 0 24 24" ><path fill="#d9d9d9" d="M15.41 7.41L14 6l-6 6 6 6 1.41-1.41L10.83 12z"/></svg>
<svg style="left:2493.40px;top:1295.70px" width="28" height="28" viewBox="0 0 24 24" ><path fill="#d9d9d9" d="M10 6L8.59 7.41 13.17 12l-4.58 4.59L10 18l6-6z"/></svg>
<div class="a" style="left:2407px;top:242.5px;width:85px;height:25.5px;background:#616161;border-radius:4px"></div>
<div class="t" style="left:2416.00px;top:248.60px;font-size:13px;color:#fff;font-weight:normal;letter-spacing:0.628px;">Add action</div>
<div class="a" style="left:1594px;top:206px;width:134px;height:52px;border:6px solid #ff0000"></div>
<div class="t" style="left:1730.00px;top:227.28px;font-size:64px;color:#ff0000;font-weight:bold;letter-spacing:2.250px;">1</div>
<div class="a" style="left:2385px;top:228px;width:125px;height:120px;border:7px solid #ff0000"></div>
<div class="t" style="left:2518.75px;top:312.18px;font-size:64px;color:#ff0000;font-weight:bold;letter-spacing:3.250px;">2</div>
</body></html>
